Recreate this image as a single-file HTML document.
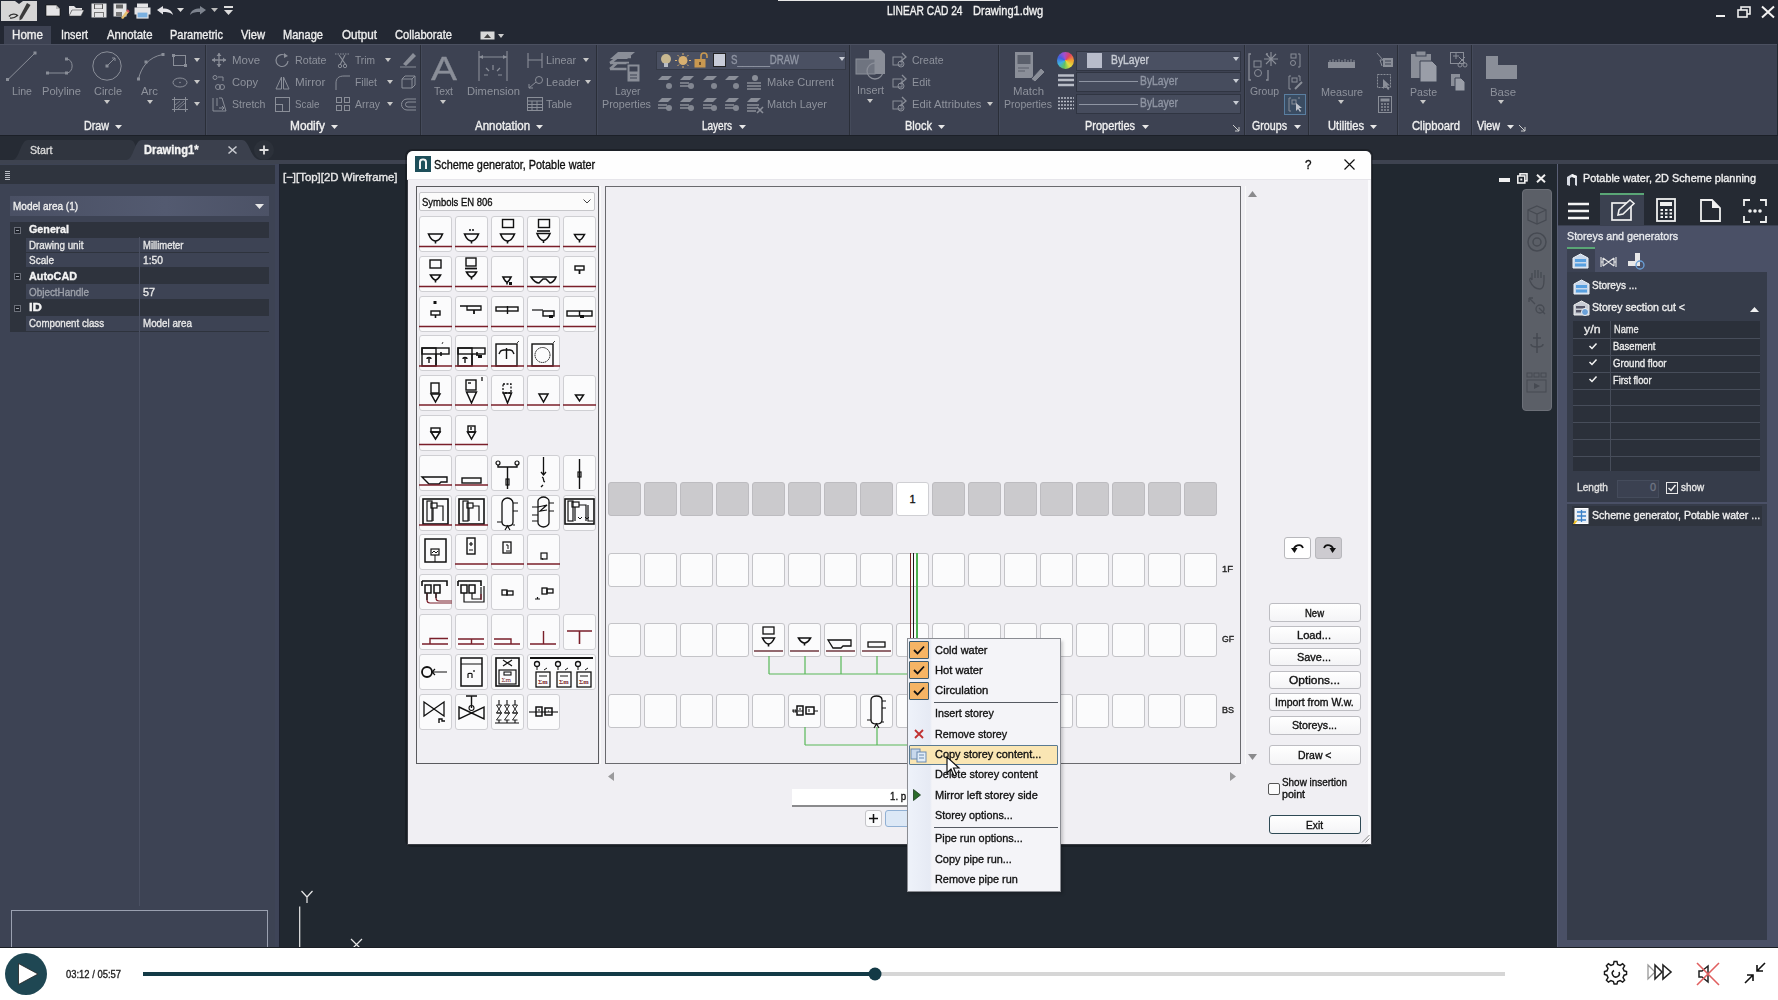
<!DOCTYPE html><html><head><meta charset="utf-8"><style>
*{margin:0;padding:0;box-sizing:border-box}
html,body{width:1778px;height:1000px;overflow:hidden;background:#212830;font-family:"Liberation Sans",sans-serif;position:relative}
.a{position:absolute}
.t{position:absolute;white-space:nowrap;line-height:1;-webkit-text-stroke:0.35px currentColor}
svg.a{overflow:visible}
</style></head><body>
<div class="a" style="left:0px;top:0px;width:1778px;height:44px;background:#232833;"></div>
<div class="a" style="left:778px;top:0px;width:222px;height:1px;background:#e8e8e8;"></div>
<div class="a" style="left:1px;top:1px;width:36px;height:20px;background:#d6d6d6;"></div>
<svg class="a" style="left:1px;top:1px;" width="36" height="20" viewBox="0 0 36 20"><path d="M26 2 L29.5 4 L21 18 L18.5 19.5 L18.5 16 Z" fill="#3a3a3a"/><path d="M8 15.5 C10 12.5 15 12.5 16.5 14.5 C14 16.5 11 17.5 9 17" stroke="#333" stroke-width="1.4" fill="none"/><path d="M14 0 L18 3 L22 0" fill="#232833"/></svg>
<svg class="a" style="left:45px;top:4px;" width="17" height="13" viewBox="0 0 17 13"><path d="M1 1 H11 L15 5 V12 H1 Z" fill="#e4e4e6" stroke="#111" stroke-width="0.6"/><path d="M11 1 V5 H15" fill="#bbb"/></svg>
<svg class="a" style="left:68px;top:5px;" width="17" height="12" viewBox="0 0 17 12"><path d="M1 1 H6 L8 3 H14 V5 H4 L1 11 Z" fill="#e4e4e6"/><path d="M4 5 H16 L13 11 H1 Z" fill="#e4e4e6" stroke="#333" stroke-width="0.5"/></svg>
<svg class="a" style="left:91px;top:3px;" width="16" height="15" viewBox="0 0 16 15"><rect x="0.5" y="0.5" width="15" height="14" fill="#e4e4e6"/><rect x="3" y="1" width="9" height="5" fill="#555"/><rect x="4" y="1.5" width="7" height="4" fill="#e4e4e6"/><rect x="3" y="9" width="10" height="5" fill="#777"/><rect x="4" y="10" width="8" height="4" fill="#e4e4e6"/></svg>
<svg class="a" style="left:113px;top:3px;" width="16" height="16" viewBox="0 0 16 16"><rect x="0.5" y="0.5" width="13" height="13" fill="#e4e4e6"/><rect x="3" y="1.5" width="7" height="4" fill="#666"/><rect x="3" y="9" width="6" height="4" fill="#777"/><path d="M8 15 L14 7 L16 9 L10 16 Z" fill="#e8c070"/><path d="M14 7 L16 9" stroke="#d05060" stroke-width="2"/></svg>
<svg class="a" style="left:134px;top:3px;" width="17" height="15" viewBox="0 0 17 15"><rect x="3" y="0.5" width="11" height="4" fill="#e4e4e6"/><rect x="0.5" y="4.5" width="16" height="7" fill="#e4e4e6"/><rect x="3" y="9" width="11" height="6" fill="#7ab0e0" stroke="#e4e4e6" stroke-width="1.2"/></svg>
<svg class="a" style="left:157px;top:6px;" width="17" height="9" viewBox="0 0 17 9"><path d="M0 4 L6 0 V2.5 C11 2.5 15 4 16 9 C13 6 10 6 6 6 V8.5 Z" fill="#e4e4e8"/></svg>
<svg class="a" style="left:177px;top:8px;" width="7" height="4" viewBox="0 0 7 4"><path d="M0 0 H7 L3.5 4 Z" fill="#ddd"/></svg>
<svg class="a" style="left:190px;top:6px;" width="17" height="9" viewBox="0 0 17 9"><path d="M16 4 L10 0 V2.5 C5 2.5 1 4 0 9 C3 6 6 6 10 6 V8.5 Z" fill="#7d838e"/></svg>
<svg class="a" style="left:211px;top:8px;" width="7" height="4" viewBox="0 0 7 4"><path d="M0 0 H7 L3.5 4 Z" fill="#bbb"/></svg>
<svg class="a" style="left:224px;top:6px;" width="9" height="10" viewBox="0 0 9 10"><rect x="0" y="0" width="9" height="2" fill="#ddd"/><path d="M0 4 H9 L4.5 9 Z" fill="#ddd"/></svg>
<div class="t" style="left:887.0px;top:4.1px;font-size:13px;color:#f2f2f2;transform:scaleX(0.786);transform-origin:0 0;">LINEAR CAD 24</div>
<div class="t" style="left:973.4px;top:4.1px;font-size:13px;color:#f2f2f2;transform:scaleX(0.851);transform-origin:0 0;">Drawing1.dwg</div>
<div class="a" style="left:1716px;top:15px;width:9px;height:2px;background:#f0f0f0;"></div>
<svg class="a" style="left:1737px;top:6px;" width="15" height="12" viewBox="0 0 15 12"><rect x="4" y="1" width="9" height="7" fill="none" stroke="#eee" stroke-width="1.6"/><rect x="1" y="4" width="9" height="7" fill="#232833" stroke="#eee" stroke-width="1.6"/></svg>
<svg class="a" style="left:1761px;top:6px;" width="14" height="12" viewBox="0 0 14 12"><path d="M1 0.5 L13 11.5 M13 0.5 L1 11.5" stroke="#f2f2f2" stroke-width="2"/></svg>
<div class="a" style="left:4px;top:26px;width:47px;height:19px;background:#3d4252;"></div>
<div class="t" style="left:12.0px;top:29.0px;font-size:12px;color:#eeeeee;transform:scaleX(0.969);transform-origin:0 0;">Home</div>
<div class="t" style="left:61.0px;top:29.0px;font-size:12px;color:#eeeeee;transform:scaleX(0.900);transform-origin:0 0;">Insert</div>
<div class="t" style="left:106.5px;top:29.0px;font-size:12px;color:#eeeeee;transform:scaleX(0.947);transform-origin:0 0;">Annotate</div>
<div class="t" style="left:170.0px;top:29.0px;font-size:12px;color:#eeeeee;transform:scaleX(0.914);transform-origin:0 0;">Parametric</div>
<div class="t" style="left:241.0px;top:29.0px;font-size:12px;color:#eeeeee;transform:scaleX(0.931);transform-origin:0 0;">View</div>
<div class="t" style="left:283.0px;top:29.0px;font-size:12px;color:#eeeeee;transform:scaleX(0.922);transform-origin:0 0;">Manage</div>
<div class="t" style="left:342.0px;top:29.0px;font-size:12px;color:#eeeeee;transform:scaleX(0.972);transform-origin:0 0;">Output</div>
<div class="t" style="left:395.0px;top:29.0px;font-size:12px;color:#eeeeee;transform:scaleX(0.929);transform-origin:0 0;">Collaborate</div>
<svg class="a" style="left:480px;top:31px;" width="15" height="10" viewBox="0 0 15 10"><rect x="0.5" y="0.5" width="14" height="8" fill="#d8d8d8"/><path d="M4 7 L7.5 3 L11 7 Z" fill="#444"/></svg>
<svg class="a" style="left:498px;top:34px;" width="6" height="4" viewBox="0 0 6 4"><path d="M0 0 H6 L3 4 Z" fill="#ccc"/></svg>
<div class="a" style="left:0px;top:44px;width:1777px;height:92px;background:#3d4252;"></div>
<div class="a" style="left:0px;top:44px;width:1777px;height:1px;background:#4b5060;"></div>
<div class="a" style="left:0px;top:135px;width:1778px;height:1px;background:#1c2028;"></div>
<div class="a" style="left:205px;top:45px;width:1px;height:90px;background:#2a2e38;"></div>
<div class="a" style="left:206px;top:45px;width:1px;height:90px;background:#444a5a;"></div>
<div class="a" style="left:420px;top:45px;width:1px;height:90px;background:#2a2e38;"></div>
<div class="a" style="left:421px;top:45px;width:1px;height:90px;background:#444a5a;"></div>
<div class="a" style="left:596px;top:45px;width:1px;height:90px;background:#2a2e38;"></div>
<div class="a" style="left:597px;top:45px;width:1px;height:90px;background:#444a5a;"></div>
<div class="a" style="left:849px;top:45px;width:1px;height:90px;background:#2a2e38;"></div>
<div class="a" style="left:850px;top:45px;width:1px;height:90px;background:#444a5a;"></div>
<div class="a" style="left:998px;top:45px;width:1px;height:90px;background:#2a2e38;"></div>
<div class="a" style="left:999px;top:45px;width:1px;height:90px;background:#444a5a;"></div>
<div class="a" style="left:1244px;top:45px;width:1px;height:90px;background:#2a2e38;"></div>
<div class="a" style="left:1245px;top:45px;width:1px;height:90px;background:#444a5a;"></div>
<div class="a" style="left:1308px;top:45px;width:1px;height:90px;background:#2a2e38;"></div>
<div class="a" style="left:1309px;top:45px;width:1px;height:90px;background:#444a5a;"></div>
<div class="a" style="left:1397px;top:45px;width:1px;height:90px;background:#2a2e38;"></div>
<div class="a" style="left:1398px;top:45px;width:1px;height:90px;background:#444a5a;"></div>
<div class="a" style="left:1471px;top:45px;width:1px;height:90px;background:#2a2e38;"></div>
<div class="a" style="left:1472px;top:45px;width:1px;height:90px;background:#444a5a;"></div>
<svg class="a" style="left:5px;top:51px;" width="32" height="31" viewBox="0 0 32 31"><path d="M2.5 29 L30 2" stroke="#8a8e98" stroke-width="1"/><rect x="1" y="27" width="3" height="3" fill="#8a8e98"/><rect x="28.5" y="0.5" width="3" height="3" fill="#8a8e98"/></svg>
<div class="t" style="left:11.5px;top:86.4px;font-size:11px;color:#8e929c;transform:scaleX(0.962);transform-origin:0 0;-webkit-text-stroke:0">Line</div>
<svg class="a" style="left:45px;top:57px;" width="32" height="20" viewBox="0 0 32 20"><path d="M2.5 16 H21.5 M21.5 2 C29 2 29 16 21.5 16" stroke="#8a8e98" stroke-width="1" fill="none"/><rect x="1" y="14.5" width="3" height="3" fill="#8a8e98"/><rect x="20" y="14.5" width="3" height="3" fill="#8a8e98"/><rect x="20" y="0.5" width="3" height="3" fill="#8a8e98"/></svg>
<div class="t" style="left:41.5px;top:86.4px;font-size:11px;color:#8e929c;transform:scaleX(1.012);transform-origin:0 0;-webkit-text-stroke:0">Polyline</div>
<svg class="a" style="left:91px;top:51px;" width="32" height="32" viewBox="0 0 32 32"><circle cx="16" cy="15" r="14.2" stroke="#8a8e98" stroke-width="1" fill="none"/><rect x="14.5" y="13.5" width="3" height="3" fill="#8a8e98"/><path d="M17 14 L24 7 M21 7 H24 V10" stroke="#8a8e98" stroke-width="1" fill="none"/></svg>
<div class="t" style="left:94.0px;top:86.4px;font-size:11px;color:#8e929c;transform:scaleX(0.996);transform-origin:0 0;-webkit-text-stroke:0">Circle</div>
<svg class="a" style="left:104px;top:100px;" width="6" height="4" viewBox="0 0 6 4"><path d="M0 0 H6 L3 4 Z" fill="#c8c8c8"/></svg>
<svg class="a" style="left:136px;top:52px;" width="30" height="30" viewBox="0 0 30 30"><path d="M2.5 27 C5 16 12 5 27 2.5" stroke="#8a8e98" stroke-width="1" fill="none"/><rect x="1" y="25.5" width="3" height="3" fill="#8a8e98"/><rect x="8.5" y="8.5" width="3" height="3" fill="#8a8e98"/><rect x="25.5" y="1" width="3" height="3" fill="#8a8e98"/></svg>
<div class="t" style="left:141.0px;top:86.4px;font-size:11px;color:#8e929c;transform:scaleX(1.030);transform-origin:0 0;-webkit-text-stroke:0">Arc</div>
<svg class="a" style="left:147px;top:100px;" width="6" height="4" viewBox="0 0 6 4"><path d="M0 0 H6 L3 4 Z" fill="#c8c8c8"/></svg>
<svg class="a" style="left:172px;top:54px;" width="16" height="13" viewBox="0 0 16 13"><rect x="1.5" y="1.5" width="12" height="10" stroke="#8a8e98" fill="none"/><rect x="0" y="0" width="3" height="3" fill="#8a8e98"/><rect x="12" y="10" width="3" height="3" fill="#8a8e98"/></svg>
<svg class="a" style="left:194px;top:58px;" width="6" height="4" viewBox="0 0 6 4"><path d="M0 0 H6 L3 4 Z" fill="#c8c8c8"/></svg>
<svg class="a" style="left:172px;top:77px;" width="16" height="11" viewBox="0 0 16 11"><ellipse cx="8" cy="5.5" rx="7" ry="4.5" stroke="#8a8e98" fill="none"/><circle cx="8" cy="5.5" r="0.8" fill="#8a8e98"/></svg>
<svg class="a" style="left:194px;top:80px;" width="6" height="4" viewBox="0 0 6 4"><path d="M0 0 H6 L3 4 Z" fill="#c8c8c8"/></svg>
<svg class="a" style="left:172px;top:97px;" width="17" height="15" viewBox="0 0 17 15"><rect x="2.5" y="2.5" width="11" height="10" stroke="#8a8e98" fill="none"/><path d="M0 2.5 H16 M0 12.5 H16 M2.5 0 V15 M13.5 0 V15" stroke="#8a8e98"/><path d="M4 11 L12 4 M6 12 L13 6 M3 8 L8 4" stroke="#8a8e98" stroke-width="0.8"/></svg>
<svg class="a" style="left:194px;top:102px;" width="6" height="4" viewBox="0 0 6 4"><path d="M0 0 H6 L3 4 Z" fill="#c8c8c8"/></svg>
<div class="t" style="left:84.0px;top:120.3px;font-size:12px;color:#f0f0f0;transform:scaleX(0.893);transform-origin:0 0;">Draw</div>
<svg class="a" style="left:115px;top:125px;" width="7" height="4" viewBox="0 0 7 4"><path d="M0 0 H7 L3.5 4 Z" fill="#e8e8e8"/></svg>
<svg class="a" style="left:212px;top:53px;" width="14" height="14" viewBox="0 0 14 14"><path d="M7 0 V14 M0 7 H14" stroke="#8a8e98" stroke-width="1.3"/><path d="M7 0 L4.5 3 H9.5Z M7 14 L4.5 11 H9.5Z M0 7 L3 4.5 V9.5Z M14 7 L11 4.5 V9.5Z" fill="#8a8e98"/></svg>
<div class="t" style="left:231.5px;top:54.8px;font-size:11px;color:#8e929c;transform:scaleX(1.041);transform-origin:0 0;-webkit-text-stroke:0">Move</div>
<svg class="a" style="left:275px;top:53px;" width="15" height="15" viewBox="0 0 15 15"><path d="M11 3 A6 6 0 1 0 13 8" stroke="#8a8e98" stroke-width="1.2" fill="none"/><path d="M9 0 L13 3 L9 5 Z" fill="#8a8e98"/></svg>
<div class="t" style="left:294.5px;top:54.8px;font-size:11px;color:#8e929c;transform:scaleX(0.972);transform-origin:0 0;-webkit-text-stroke:0">Rotate</div>
<svg class="a" style="left:335px;top:53px;" width="15" height="15" viewBox="0 0 15 15"><path d="M0 1 H15" stroke="#8a8e98" stroke-dasharray="1.5 1"/><path d="M4 2 L11 12 M10 2 L5 12" stroke="#8a8e98" stroke-width="1.1"/><circle cx="5" cy="13" r="1.7" stroke="#8a8e98" fill="none"/><circle cx="10" cy="13" r="1.7" stroke="#8a8e98" fill="none"/></svg>
<div class="t" style="left:355.0px;top:54.8px;font-size:11px;color:#8e929c;transform:scaleX(0.927);transform-origin:0 0;-webkit-text-stroke:0">Trim</div>
<svg class="a" style="left:385px;top:58px;" width="6" height="4" viewBox="0 0 6 4"><path d="M0 0 H6 L3 4 Z" fill="#c8c8c8"/></svg>
<svg class="a" style="left:400px;top:52px;" width="16" height="16" viewBox="0 0 16 16"><path d="M3 12 L13 1 L16 4 L6 14 Z" fill="#8a8e98"/><path d="M0 15 H16" stroke="#8a8e98"/></svg>
<svg class="a" style="left:212px;top:75px;" width="14" height="15" viewBox="0 0 14 15"><circle cx="3" cy="2.5" r="2" stroke="#8a8e98" fill="none"/><path d="M6 2 H11 V6" stroke="#8a8e98" fill="none"/><circle cx="6" cy="12" r="2.5" stroke="#8a8e98" fill="none"/><circle cx="10" cy="12" r="2.5" stroke="#8a8e98" fill="none"/></svg>
<div class="t" style="left:231.5px;top:77.1px;font-size:11px;color:#8e929c;transform:scaleX(1.013);transform-origin:0 0;-webkit-text-stroke:0">Copy</div>
<svg class="a" style="left:275px;top:76px;" width="15" height="14" viewBox="0 0 15 14"><path d="M6.5 1 L1 13 H6.5 Z M8.5 1 L14 13 H8.5 Z" stroke="#8a8e98" fill="none"/></svg>
<div class="t" style="left:294.5px;top:77.1px;font-size:11px;color:#8e929c;transform:scaleX(1.062);transform-origin:0 0;-webkit-text-stroke:0">Mirror</div>
<svg class="a" style="left:335px;top:75px;" width="15" height="16" viewBox="0 0 15 16"><path d="M1 15 V8 C1 3 4 1 9 1 H15" stroke="#8a8e98" fill="none"/></svg>
<div class="t" style="left:355.0px;top:77.1px;font-size:11px;color:#8e929c;transform:scaleX(0.947);transform-origin:0 0;-webkit-text-stroke:0">Fillet</div>
<svg class="a" style="left:387px;top:80px;" width="6" height="4" viewBox="0 0 6 4"><path d="M0 0 H6 L3 4 Z" fill="#c8c8c8"/></svg>
<svg class="a" style="left:401px;top:75px;" width="15" height="14" viewBox="0 0 15 14"><path d="M1 4 H11 V13 H1 Z M1 4 L4 1 H14 V10 L11 13 M11 4 L14 1" stroke="#8a8e98" fill="none"/></svg>
<svg class="a" style="left:212px;top:97px;" width="15" height="15" viewBox="0 0 15 15"><path d="M1 1 V14 H14 L10 1 H7 M5 1 V9" stroke="#8a8e98" fill="none"/><path d="M7 11 H12 M10 9 L12 11 L10 13" stroke="#8a8e98" fill="none"/></svg>
<div class="t" style="left:231.5px;top:99.1px;font-size:11px;color:#8e929c;transform:scaleX(0.961);transform-origin:0 0;-webkit-text-stroke:0">Stretch</div>
<svg class="a" style="left:275px;top:97px;" width="15" height="15" viewBox="0 0 15 15"><rect x="0.5" y="0.5" width="14" height="14" stroke="#8a8e98" fill="none"/><rect x="0.5" y="7.5" width="7" height="7" stroke="#8a8e98" fill="none"/></svg>
<div class="t" style="left:294.5px;top:99.1px;font-size:11px;color:#8e929c;transform:scaleX(0.890);transform-origin:0 0;-webkit-text-stroke:0">Scale</div>
<svg class="a" style="left:336px;top:97px;" width="14" height="14" viewBox="0 0 14 14"><rect x="0.5" y="0.5" width="5" height="5" stroke="#8a8e98" fill="none"/><rect x="8.5" y="0.5" width="5" height="5" stroke="#8a8e98" fill="none"/><rect x="0.5" y="8.5" width="5" height="5" stroke="#8a8e98" fill="none"/><rect x="8.5" y="8.5" width="5" height="5" stroke="#8a8e98" fill="none"/></svg>
<div class="t" style="left:355.0px;top:99.1px;font-size:11px;color:#8e929c;transform:scaleX(0.951);transform-origin:0 0;-webkit-text-stroke:0">Array</div>
<svg class="a" style="left:387px;top:102px;" width="6" height="4" viewBox="0 0 6 4"><path d="M0 0 H6 L3 4 Z" fill="#c8c8c8"/></svg>
<svg class="a" style="left:401px;top:98px;" width="15" height="13" viewBox="0 0 15 13"><path d="M15 1 H6 A5.5 5.5 0 0 0 6 12 H15 M15 4 H7 A2.5 2.5 0 0 0 7 9 H15" stroke="#8a8e98" fill="none"/></svg>
<div class="t" style="left:290.0px;top:120.3px;font-size:12px;color:#f0f0f0;transform:scaleX(0.990);transform-origin:0 0;">Modify</div>
<svg class="a" style="left:331px;top:125px;" width="7" height="4" viewBox="0 0 7 4"><path d="M0 0 H7 L3.5 4 Z" fill="#e8e8e8"/></svg>
<div class="t" style="left:431.0px;top:51.2px;font-size:34px;color:#8a8e98;transform:scaleX(1.146);transform-origin:0 0;">A</div>
<div class="t" style="left:434.0px;top:86.4px;font-size:11px;color:#8e929c;transform:scaleX(0.942);transform-origin:0 0;-webkit-text-stroke:0">Text</div>
<svg class="a" style="left:440px;top:100px;" width="6" height="4" viewBox="0 0 6 4"><path d="M0 0 H6 L3 4 Z" fill="#c8c8c8"/></svg>
<svg class="a" style="left:477px;top:51px;" width="32" height="30" viewBox="0 0 32 30"><path d="M2 0 V30 M30 0 V30 M2 6 H30" stroke="#8a8e98" stroke-width="1.1"/><path d="M2 6 L6 4 V8 Z M30 6 L26 4 V8Z" fill="#8a8e98"/><path d="M16 14 V19 M9 17 L12 20 M23 17 L20 20 M7 24 H11 M21 24 H25" stroke="#8a8e98" stroke-width="1.2"/></svg>
<div class="t" style="left:467.0px;top:86.4px;font-size:11px;color:#8e929c;transform:scaleX(1.020);transform-origin:0 0;-webkit-text-stroke:0">Dimension</div>
<svg class="a" style="left:527px;top:53px;" width="16" height="15" viewBox="0 0 16 15"><path d="M1 0 V15 M15 0 V15 M1 7 H15" stroke="#8a8e98" stroke-width="1.1"/></svg>
<div class="t" style="left:546.0px;top:54.8px;font-size:11px;color:#8e929c;transform:scaleX(0.981);transform-origin:0 0;-webkit-text-stroke:0">Linear</div>
<svg class="a" style="left:583px;top:58px;" width="6" height="4" viewBox="0 0 6 4"><path d="M0 0 H6 L3 4 Z" fill="#c8c8c8"/></svg>
<svg class="a" style="left:527px;top:75px;" width="17" height="15" viewBox="0 0 17 15"><circle cx="12" cy="5" r="3.5" stroke="#8a8e98" fill="none"/><path d="M9 7 L2 13 M2 13 V9 M2 13 H6" stroke="#8a8e98" fill="none"/></svg>
<div class="t" style="left:546.0px;top:77.1px;font-size:11px;color:#8e929c;transform:scaleX(0.993);transform-origin:0 0;-webkit-text-stroke:0">Leader</div>
<svg class="a" style="left:585px;top:80px;" width="6" height="4" viewBox="0 0 6 4"><path d="M0 0 H6 L3 4 Z" fill="#c8c8c8"/></svg>
<svg class="a" style="left:527px;top:97px;" width="16" height="14" viewBox="0 0 16 14"><rect x="0.5" y="0.5" width="15" height="13" stroke="#8a8e98" fill="none"/><path d="M0 4 H16 M0 7.5 H16 M0 10.5 H16 M5 4 V14 M10 4 V14" stroke="#8a8e98"/></svg>
<div class="t" style="left:546.0px;top:99.1px;font-size:11px;color:#8e929c;transform:scaleX(0.989);transform-origin:0 0;-webkit-text-stroke:0">Table</div>
<div class="t" style="left:475.0px;top:120.3px;font-size:12px;color:#f0f0f0;transform:scaleX(0.959);transform-origin:0 0;">Annotation</div>
<svg class="a" style="left:536px;top:125px;" width="7" height="4" viewBox="0 0 7 4"><path d="M0 0 H7 L3.5 4 Z" fill="#e8e8e8"/></svg>
<svg class="a" style="left:609px;top:51px;" width="34" height="32" viewBox="0 0 34 32"><path d="M9 1 H26 L18 8 H1 Z" fill="#8a8e98"/><path d="M1 12 L9 6 H22 M1 18 L8 12 H20 M1 12 H20 M1 18 H18" stroke="#8a8e98" stroke-width="2.5" fill="none"/><rect x="18" y="13" width="13" height="18" fill="#8a8e98" stroke="#3d4252"/><rect x="20.5" y="15.5" width="8" height="5" fill="#3d4252"/><path d="M21 24 H28 M21 27 H28" stroke="#3d4252"/></svg>
<div class="t" style="left:614.5px;top:85.7px;font-size:11px;color:#8e929c;transform:scaleX(0.927);transform-origin:0 0;-webkit-text-stroke:0">Layer</div>
<div class="t" style="left:602.0px;top:99.2px;font-size:11px;color:#8e929c;transform:scaleX(0.977);transform-origin:0 0;-webkit-text-stroke:0">Properties</div>
<div class="a" style="left:656px;top:51px;width:190px;height:19px;background:#4a5062;border:1px solid #353a47;"></div>
<svg class="a" style="left:660px;top:53px;" width="12" height="15" viewBox="0 0 12 15"><circle cx="6" cy="6" r="5" fill="#c8b890"/><rect x="4" y="10" width="4" height="4" fill="#b8bcc4"/></svg>
<svg class="a" style="left:675px;top:53px;" width="16" height="15" viewBox="0 0 16 15"><circle cx="8" cy="7.5" r="4.5" fill="#d8b070"/><path d="M8 0 V2 M8 13 V15 M0 7.5 H2 M14 7.5 H16 M2.5 2 L4 3.5 M12 11.5 L13.5 13 M13.5 2 L12 3.5 M4 11.5 L2.5 13" stroke="#d8b070"/></svg>
<svg class="a" style="left:694px;top:52px;" width="14" height="16" viewBox="0 0 14 16"><rect x="0.5" y="7" width="11" height="8.5" fill="#c89850"/><path d="M7 7 V4 A3 3 0 0 1 13 4 V6" stroke="#c89850" stroke-width="1.6" fill="none"/><rect x="5" y="10" width="2" height="3" fill="#6a5030"/></svg>
<div class="a" style="left:713px;top:53px;width:13px;height:14px;background:#c8ccd8;border:1px solid #222;"></div>
<div class="t" style="left:731.0px;top:54.3px;font-size:12px;color:#8f95a3;transform:scaleX(0.807);transform-origin:0 0;">S______DRAW</div>
<svg class="a" style="left:839px;top:57px;" width="6" height="4" viewBox="0 0 6 4"><path d="M0 0 H6 L3 4 Z" fill="#c8ccd4"/></svg>
<svg class="a" style="left:658px;top:75px;" width="17" height="16" viewBox="0 0 17 16"><path d="M4 1 H14 L10 5 H0 Z" fill="#8a8e98"/><path d="M0 8 H9 M0 11 H9" stroke="#8a8e98" stroke-width="0"/><circle cx="11" cy="11" r="3" fill="#8a8e98" opacity="0.9"/></svg>
<svg class="a" style="left:680px;top:75px;" width="17" height="16" viewBox="0 0 17 16"><path d="M4 1 H14 L10 5 H0 Z" fill="#8a8e98"/><path d="M0 8 H9 M0 11 H9" stroke="#8a8e98" stroke-width="1.5"/><circle cx="11" cy="11" r="3" fill="#8a8e98" opacity="0.9"/></svg>
<svg class="a" style="left:703px;top:75px;" width="17" height="16" viewBox="0 0 17 16"><path d="M4 1 H14 L10 5 H0 Z" fill="#8a8e98"/><path d="M0 8 H9 M0 11 H9" stroke="#8a8e98" stroke-width="0"/><circle cx="11" cy="11" r="3" fill="#8a8e98" opacity="0.9"/></svg>
<svg class="a" style="left:725px;top:75px;" width="17" height="16" viewBox="0 0 17 16"><path d="M4 1 H14 L10 5 H0 Z" fill="#8a8e98"/><path d="M0 8 H9 M0 11 H9" stroke="#8a8e98" stroke-width="0"/><circle cx="11" cy="11" r="3" fill="#8a8e98" opacity="0.9"/></svg>
<svg class="a" style="left:747px;top:75px;" width="17" height="16" viewBox="0 0 17 16"><circle cx="8" cy="3" r="3" fill="#8a8e98"/><path d="M0 8 H14 M0 11 H14 M0 14 H14" stroke="#8a8e98" stroke-width="1.6"/></svg>
<div class="t" style="left:767.0px;top:76.9px;font-size:11px;color:#8e929c;transform:scaleX(1.006);transform-origin:0 0;-webkit-text-stroke:0">Make Current</div>
<svg class="a" style="left:658px;top:97px;" width="17" height="16" viewBox="0 0 17 16"><path d="M4 1 H14 L10 5 H0 Z" fill="#8a8e98"/><path d="M0 8 H9 M0 11 H9" stroke="#8a8e98" stroke-width="1.5"/><circle cx="11" cy="11" r="3" fill="#8a8e98" opacity="0.9"/></svg>
<svg class="a" style="left:680px;top:97px;" width="17" height="16" viewBox="0 0 17 16"><path d="M4 1 H14 L10 5 H0 Z" fill="#8a8e98"/><path d="M0 8 H9 M0 11 H9" stroke="#8a8e98" stroke-width="1.5"/><circle cx="11" cy="11" r="3" fill="#8a8e98" opacity="0.9"/></svg>
<svg class="a" style="left:703px;top:97px;" width="17" height="16" viewBox="0 0 17 16"><path d="M4 1 H14 L10 5 H0 Z" fill="#8a8e98"/><path d="M0 8 H9 M0 11 H9" stroke="#8a8e98" stroke-width="1.5"/><circle cx="11" cy="11" r="3" fill="#8a8e98" opacity="0.9"/></svg>
<svg class="a" style="left:725px;top:97px;" width="17" height="16" viewBox="0 0 17 16"><path d="M4 1 H14 L10 5 H0 Z" fill="#8a8e98"/><path d="M0 8 H9 M0 11 H9" stroke="#8a8e98" stroke-width="1.5"/><circle cx="11" cy="11" r="3" fill="#8a8e98" opacity="0.9"/></svg>
<svg class="a" style="left:747px;top:97px;" width="17" height="16" viewBox="0 0 17 16"><path d="M4 1 H14 L10 5 H0 Z" fill="#8a8e98"/><path d="M0 8 H12 M0 11 H10 M0 14 H9" stroke="#8a8e98" stroke-width="1.6"/><path d="M10 10 L16 16 M16 10 L10 16" stroke="#8a8e98" stroke-width="1.6"/></svg>
<div class="t" style="left:767.0px;top:98.9px;font-size:11px;color:#8e929c;transform:scaleX(0.991);transform-origin:0 0;-webkit-text-stroke:0">Match Layer</div>
<div class="t" style="left:702.0px;top:120.3px;font-size:12px;color:#f0f0f0;transform:scaleX(0.833);transform-origin:0 0;">Layers</div>
<svg class="a" style="left:739px;top:125px;" width="7" height="4" viewBox="0 0 7 4"><path d="M0 0 H7 L3.5 4 Z" fill="#e8e8e8"/></svg>
<svg class="a" style="left:855px;top:50px;" width="30" height="31" viewBox="0 0 30 31"><path d="M14 0 H26 L30 4 V24 H14 Z" fill="#8a8e98"/><rect x="1" y="9" width="19" height="15" fill="#6f7480" stroke="#8a8e98"/><circle cx="20" cy="21" r="8" stroke="#8a8e98" fill="none" stroke-width="1.3"/></svg>
<div class="t" style="left:856.5px;top:85.2px;font-size:11px;color:#8e929c;transform:scaleX(0.982);transform-origin:0 0;-webkit-text-stroke:0">Insert</div>
<svg class="a" style="left:867px;top:99px;" width="6" height="4" viewBox="0 0 6 4"><path d="M0 0 H6 L3 4 Z" fill="#c8c8c8"/></svg>
<svg class="a" style="left:892px;top:53px;" width="15" height="15" viewBox="0 0 15 15"><rect x="1" y="4" width="9" height="8" stroke="#8a8e98" fill="none"/><circle cx="9" cy="11" r="3" stroke="#8a8e98" fill="none"/><path d="M10 0 L14 4 L8 9" stroke="#8a8e98" stroke-width="1.3" fill="none"/></svg>
<svg class="a" style="left:892px;top:75px;" width="15" height="15" viewBox="0 0 15 15"><rect x="1" y="4" width="9" height="8" stroke="#8a8e98" fill="none"/><circle cx="9" cy="11" r="3" stroke="#8a8e98" fill="none"/><path d="M10 0 L14 4 L8 9" stroke="#8a8e98" stroke-width="1.3" fill="none"/></svg>
<svg class="a" style="left:892px;top:97px;" width="15" height="15" viewBox="0 0 15 15"><rect x="1" y="4" width="9" height="8" stroke="#8a8e98" fill="none"/><circle cx="9" cy="11" r="3" stroke="#8a8e98" fill="none"/><path d="M10 0 L14 4 L8 9" stroke="#8a8e98" stroke-width="1.3" fill="none"/></svg>
<div class="t" style="left:911.5px;top:54.8px;font-size:11px;color:#8e929c;transform:scaleX(0.954);transform-origin:0 0;-webkit-text-stroke:0">Create</div>
<div class="t" style="left:911.5px;top:77.2px;font-size:11px;color:#8e929c;transform:scaleX(0.976);transform-origin:0 0;-webkit-text-stroke:0">Edit</div>
<div class="t" style="left:911.5px;top:99.2px;font-size:11px;color:#8e929c;transform:scaleX(1.024);transform-origin:0 0;-webkit-text-stroke:0">Edit Attributes</div>
<svg class="a" style="left:987px;top:102px;" width="6" height="4" viewBox="0 0 6 4"><path d="M0 0 H6 L3 4 Z" fill="#c8c8c8"/></svg>
<div class="t" style="left:905.0px;top:120.3px;font-size:12px;color:#f0f0f0;transform:scaleX(0.920);transform-origin:0 0;">Block</div>
<svg class="a" style="left:938px;top:125px;" width="7" height="4" viewBox="0 0 7 4"><path d="M0 0 H7 L3.5 4 Z" fill="#e8e8e8"/></svg>
<svg class="a" style="left:1013px;top:51px;" width="32" height="32" viewBox="0 0 32 32"><rect x="2" y="1" width="18" height="26" fill="#8a8e98"/><rect x="4.5" y="4" width="13" height="9" fill="#5a5f6b"/><path d="M5 17 H16 M5 20 H12" stroke="#5a5f6b"/><path d="M18 28 L28 17 L32 21 L22 31 Z" fill="#8a8e98" stroke="#3d4252"/></svg>
<div class="t" style="left:1013.0px;top:85.7px;font-size:11px;color:#8e929c;transform:scaleX(1.035);transform-origin:0 0;-webkit-text-stroke:0">Match</div>
<div class="t" style="left:1004.0px;top:99.4px;font-size:11px;color:#8e929c;transform:scaleX(0.957);transform-origin:0 0;-webkit-text-stroke:0">Properties</div>
<div class="a" style="left:1057px;top:52px;width:17px;height:17px;border-radius:9px;background:conic-gradient(from 90deg,#f0a030,#e0e040,#60c060,#40b0e0,#4060e0,#a050d0,#e04060,#f0a030)"></div>
<svg class="a" style="left:1058px;top:74px;" width="16" height="15" viewBox="0 0 16 15"><path d="M0 1.5 H16 M0 6 H16 M0 11 H16" stroke="#b8bcc6" stroke-width="2.4"/></svg>
<svg class="a" style="left:1058px;top:97px;" width="16" height="14" viewBox="0 0 16 14"><path d="M0 1 H16 M0 4.5 H16 M0 8 H16 M0 11.5 H16" stroke="#b8bcc6" stroke-width="1.4" stroke-dasharray="2 1"/></svg>
<div class="a" style="left:1076px;top:51px;width:165px;height:20px;background:#4a5062;border:1px solid #303542;"></div>
<div class="a" style="left:1087px;top:53px;width:15px;height:15px;background:#b8bcca;"></div>
<div class="t" style="left:1111.0px;top:54.0px;font-size:12px;color:#c8ccd4;transform:scaleX(0.863);transform-origin:0 0;">ByLayer</div>
<svg class="a" style="left:1233px;top:57px;" width="6" height="4" viewBox="0 0 6 4"><path d="M0 0 H6 L3 4 Z" fill="#c8ccd4"/></svg>
<div class="a" style="left:1076px;top:72px;width:165px;height:20px;background:#464c5d;border:1px solid #303542;"></div>
<div class="a" style="left:1079px;top:81px;width:59px;height:1px;background:#8f95a3;"></div>
<div class="t" style="left:1140.0px;top:75.3px;font-size:12px;color:#8f95a3;transform:scaleX(0.863);transform-origin:0 0;">ByLayer</div>
<svg class="a" style="left:1233px;top:79px;" width="6" height="4" viewBox="0 0 6 4"><path d="M0 0 H6 L3 4 Z" fill="#c8ccd4"/></svg>
<div class="a" style="left:1076px;top:94px;width:165px;height:20px;background:#464c5d;border:1px solid #303542;"></div>
<div class="a" style="left:1079px;top:104px;width:59px;height:1px;background:#8f95a3;"></div>
<div class="t" style="left:1140.0px;top:97.3px;font-size:12px;color:#8f95a3;transform:scaleX(0.863);transform-origin:0 0;">ByLayer</div>
<svg class="a" style="left:1233px;top:101px;" width="6" height="4" viewBox="0 0 6 4"><path d="M0 0 H6 L3 4 Z" fill="#c8ccd4"/></svg>
<div class="t" style="left:1085.0px;top:120.3px;font-size:12px;color:#f0f0f0;transform:scaleX(0.914);transform-origin:0 0;">Properties</div>
<svg class="a" style="left:1142px;top:125px;" width="7" height="4" viewBox="0 0 7 4"><path d="M0 0 H7 L3.5 4 Z" fill="#e8e8e8"/></svg>
<svg class="a" style="left:1233px;top:125px;" width="6" height="6" viewBox="0 0 6 6"><path d="M0 0 L6 6 M6 2 V6 H2" stroke="#ccc" fill="none"/></svg>
<svg class="a" style="left:1248px;top:52px;" width="32" height="31" viewBox="0 0 32 31"><path d="M3 2 H1 V28 H3 M18 2 H20 M18 28 H20 V18" stroke="#8a8e98" stroke-width="1.3" fill="none"/><rect x="6" y="9" width="7" height="6" stroke="#8a8e98" fill="none"/><circle cx="10" cy="21" r="3.5" stroke="#8a8e98" fill="none"/><path d="M23 0 V14 M16 7 H30 M18 2 L28 12 M28 2 L18 12" stroke="#8a8e98" stroke-width="1.2"/></svg>
<div class="t" style="left:1250.0px;top:85.7px;font-size:11px;color:#8e929c;transform:scaleX(0.949);transform-origin:0 0;-webkit-text-stroke:0">Group</div>
<svg class="a" style="left:1288px;top:53px;" width="15" height="15" viewBox="0 0 15 15"><rect x="3" y="1" width="5" height="4" stroke="#8a8e98" fill="none"/><circle cx="5" cy="10" r="2.5" stroke="#8a8e98" fill="none"/><path d="M10 1 H12 V14 H10" stroke="#8a8e98" fill="none"/></svg>
<svg class="a" style="left:1288px;top:75px;" width="15" height="15" viewBox="0 0 15 15"><path d="M3 1 H1 V14 H3 M10 1 H12 V6" stroke="#8a8e98" fill="none"/><rect x="4" y="3" width="5" height="4" stroke="#8a8e98" fill="none"/><path d="M7 14 L14 7" stroke="#8a8e98" stroke-width="2"/></svg>
<div class="a" style="left:1284px;top:94px;width:22px;height:21px;background:#3a4c62;border:1px solid #5a7ea0;"></div>
<svg class="a" style="left:1288px;top:97px;" width="15" height="15" viewBox="0 0 15 15"><path d="M3 1 H1 V14 H3 M10 1 H12" stroke="#8a8e98" fill="none"/><rect x="4" y="3" width="4" height="4" stroke="#8a8e98" fill="none"/><path d="M8 6 L8 14 L10 12 L12 15 L13 14 L11 11 L14 11 Z" fill="#c0c4cc"/></svg>
<div class="t" style="left:1252.0px;top:120.3px;font-size:12px;color:#f0f0f0;transform:scaleX(0.889);transform-origin:0 0;">Groups</div>
<svg class="a" style="left:1294px;top:125px;" width="7" height="4" viewBox="0 0 7 4"><path d="M0 0 H7 L3.5 4 Z" fill="#e8e8e8"/></svg>
<svg class="a" style="left:1328px;top:59px;" width="28" height="10" viewBox="0 0 28 10"><rect x="0" y="3" width="27" height="6" fill="#8a8e98"/><path d="M2 3 V1 M5 3 V0 M8 3 V1 M11 3 V0 M14 3 V1 M17 3 V0 M20 3 V1 M23 3 V0 M26 3 V1" stroke="#8a8e98"/></svg>
<div class="t" style="left:1320.5px;top:86.7px;font-size:11px;color:#8e929c;transform:scaleX(0.981);transform-origin:0 0;-webkit-text-stroke:0">Measure</div>
<svg class="a" style="left:1338px;top:100px;" width="6" height="4" viewBox="0 0 6 4"><path d="M0 0 H6 L3 4 Z" fill="#c8c8c8"/></svg>
<svg class="a" style="left:1377px;top:52px;" width="16" height="16" viewBox="0 0 16 16"><path d="M0 1 L6 8 L3 8 L5 14" stroke="#8a8e98" fill="none"/><rect x="6" y="6" width="10" height="9" fill="#8a8e98"/><path d="M8 9 H14 M8 12 H14" stroke="#3d4252"/></svg>
<svg class="a" style="left:1377px;top:74px;" width="16" height="16" viewBox="0 0 16 16"><rect x="0.5" y="0.5" width="13" height="13" stroke="#8a8e98" fill="none" stroke-dasharray="2 1"/><path d="M6 5 L6 15 L8.5 12.5 L11 16 L12.5 15 L10 11.5 L13 11.5 Z" fill="#8a8e98"/></svg>
<svg class="a" style="left:1378px;top:96px;" width="14" height="17" viewBox="0 0 14 17"><rect x="0.5" y="0.5" width="13" height="16" stroke="#8a8e98" fill="none"/><rect x="2.5" y="2.5" width="9" height="3" fill="#8a8e98"/><path d="M3 8 H5 M6 8 H8 M9 8 H11 M3 11 H5 M6 11 H8 M9 11 H11 M3 14 H5 M6 14 H8 M9 14 H11" stroke="#8a8e98" stroke-width="1.5"/></svg>
<div class="t" style="left:1328.0px;top:120.3px;font-size:12px;color:#f0f0f0;transform:scaleX(0.931);transform-origin:0 0;">Utilities</div>
<svg class="a" style="left:1370px;top:125px;" width="7" height="4" viewBox="0 0 7 4"><path d="M0 0 H7 L3.5 4 Z" fill="#e8e8e8"/></svg>
<svg class="a" style="left:1410px;top:51px;" width="27" height="31" viewBox="0 0 27 31"><rect x="1" y="3" width="20" height="24" fill="#8a8e98"/><rect x="6" y="0" width="10" height="5" fill="#8a8e98" stroke="#3d4252"/><path d="M10 10 H22 L27 15 V31 H10 Z" fill="#9a9ea8" stroke="#3d4252"/></svg>
<div class="t" style="left:1410.0px;top:86.7px;font-size:11px;color:#8e929c;transform:scaleX(0.960);transform-origin:0 0;-webkit-text-stroke:0">Paste</div>
<svg class="a" style="left:1420px;top:100px;" width="6" height="4" viewBox="0 0 6 4"><path d="M0 0 H6 L3 4 Z" fill="#c8c8c8"/></svg>
<svg class="a" style="left:1450px;top:52px;" width="17" height="16" viewBox="0 0 17 16"><rect x="0.5" y="0.5" width="13" height="11" stroke="#8a8e98" fill="none"/><path d="M3 4 H9 M6 1 V7" stroke="#8a8e98"/><circle cx="10" cy="13" r="2" stroke="#8a8e98" fill="none"/><circle cx="15" cy="13" r="2" stroke="#8a8e98" fill="none"/><path d="M9 5 L15 11 M15 5 L9 11" stroke="#8a8e98"/></svg>
<svg class="a" style="left:1451px;top:74px;" width="14" height="17" viewBox="0 0 14 17"><rect x="0" y="0" width="9" height="12" fill="#8a8e98"/><path d="M4 4 H10 L14 8 V17 H4 Z" fill="#9a9ea8" stroke="#3d4252"/></svg>
<div class="t" style="left:1411.5px;top:120.3px;font-size:12px;color:#f0f0f0;transform:scaleX(0.935);transform-origin:0 0;">Clipboard</div>
<svg class="a" style="left:-100px;top:125px;" width="7" height="4" viewBox="0 0 7 4"><path d="M0 0 H7 L3.5 4 Z" fill="#e8e8e8"/></svg>
<svg class="a" style="left:1486px;top:56px;" width="31" height="23" viewBox="0 0 31 23"><path d="M0 0 H12 V9 H31 V23 H0 Z" fill="#8a8e98"/></svg>
<div class="t" style="left:1490.0px;top:86.7px;font-size:11px;color:#8e929c;transform:scaleX(1.037);transform-origin:0 0;-webkit-text-stroke:0">Base</div>
<svg class="a" style="left:1498px;top:100px;" width="6" height="4" viewBox="0 0 6 4"><path d="M0 0 H6 L3 4 Z" fill="#c8c8c8"/></svg>
<div class="t" style="left:1477.0px;top:120.3px;font-size:12px;color:#f0f0f0;transform:scaleX(0.892);transform-origin:0 0;">View</div>
<svg class="a" style="left:1507px;top:125px;" width="7" height="4" viewBox="0 0 7 4"><path d="M0 0 H7 L3.5 4 Z" fill="#e8e8e8"/></svg>
<svg class="a" style="left:1519px;top:125px;" width="6" height="6" viewBox="0 0 6 6"><path d="M0 0 L6 6 M6 2 V6 H2" stroke="#ccc" fill="none"/></svg>
<div class="a" style="left:0px;top:136px;width:1778px;height:24px;background:#262b34;"></div>
<svg class="a" style="left:12px;top:139px;" width="130" height="22" viewBox="0 0 130 22"><path d="M0 21 C8 21 8 1 16 1 H118 C126 1 124 21 130 21 Z" fill="#30353f"/></svg>
<svg class="a" style="left:126px;top:139px;" width="135" height="22" viewBox="0 0 135 22"><path d="M0 21 C8 21 8 1 16 1 H116 C124 1 124 21 135 21 Z" fill="#3b404d"/></svg>
<div class="t" style="left:29.5px;top:145.2px;font-size:11px;color:#d8d8d8;transform:scaleX(0.969);transform-origin:0 0;">Start</div>
<div class="t" style="left:143.5px;top:144.4px;font-size:12px;color:#f4f4f4;font-weight:bold;transform:scaleX(0.929);transform-origin:0 0;">Drawing1*</div>
<svg class="a" style="left:228px;top:146px;" width="9" height="8" viewBox="0 0 9 8"><path d="M0.5 0.5 L8.5 7.5 M8.5 0.5 L0.5 7.5" stroke="#c8cad0" stroke-width="1.6"/></svg>
<svg class="a" style="left:253px;top:140px;" width="22" height="20" viewBox="0 0 22 20"><circle cx="11" cy="10" r="10" fill="#2c313a"/><path d="M11 5.5 V14.5 M6.5 10 H15.5" stroke="#e0e0e0" stroke-width="1.8"/></svg>
<div class="a" style="left:0px;top:160px;width:1778px;height:4px;background:#3e4350;"></div>
<div class="a" style="left:0px;top:164px;width:279px;height:783px;background:#3d4354;"></div>
<div class="a" style="left:0px;top:165px;width:279px;height:19px;background:#2f343e;"></div>
<div class="a" style="left:5px;top:171px;width:5px;height:1px;background:#b8bcc4;"></div>
<div class="a" style="left:5px;top:173px;width:5px;height:1px;background:#b8bcc4;"></div>
<div class="a" style="left:5px;top:175px;width:5px;height:1px;background:#b8bcc4;"></div>
<div class="a" style="left:5px;top:177px;width:5px;height:1px;background:#b8bcc4;"></div>
<div class="a" style="left:5px;top:179px;width:5px;height:1px;background:#b8bcc4;"></div>
<div class="a" style="left:275px;top:164px;width:4px;height:783px;background:#3e4458;"></div>
<div class="a" style="left:279px;top:164px;width:2px;height:783px;background:#1e2230;"></div>
<div class="a" style="left:10px;top:196px;width:259px;height:20px;background:linear-gradient(90deg,#4a5064,#535a70 60%,#4c5266)"></div>
<div class="t" style="left:13.0px;top:200.7px;font-size:11px;color:#f0f0f0;transform:scaleX(0.909);transform-origin:0 0;">Model area (1)</div>
<svg class="a" style="left:255px;top:204px;" width="9" height="5" viewBox="0 0 9 5"><path d="M0 0 H9 L4.5 5 Z" fill="#e8e8e8"/></svg>
<div class="a" style="left:10px;top:222px;width:259px;height:110px;background:#2e333d;"></div>
<div class="a" style="left:10px;top:222px;width:259px;height:17px;background:#2e333d;"></div>
<div class="a" style="left:14px;top:227px;width:7px;height:7px;background:#1f232b;border:1px solid #6a6e78;"></div>
<div class="a" style="left:16px;top:230px;width:3px;height:1px;background:#9a9ea8;"></div>
<div class="a" style="left:26px;top:238px;width:243px;height:15px;background:#3d4354;"></div>
<div class="a" style="left:26px;top:252px;width:243px;height:1px;background:#2e333d;"></div>
<div class="a" style="left:26px;top:253px;width:243px;height:15px;background:#3d4354;"></div>
<div class="a" style="left:26px;top:267px;width:243px;height:1px;background:#2e333d;"></div>
<div class="a" style="left:10px;top:268px;width:259px;height:17px;background:#2e333d;"></div>
<div class="a" style="left:14px;top:273px;width:7px;height:7px;background:#1f232b;border:1px solid #6a6e78;"></div>
<div class="a" style="left:16px;top:276px;width:3px;height:1px;background:#9a9ea8;"></div>
<div class="a" style="left:26px;top:284px;width:243px;height:15px;background:#3d4354;"></div>
<div class="a" style="left:26px;top:299px;width:243px;height:1px;background:#2e333d;"></div>
<div class="a" style="left:10px;top:300px;width:259px;height:17px;background:#2e333d;"></div>
<div class="a" style="left:14px;top:305px;width:7px;height:7px;background:#1f232b;border:1px solid #6a6e78;"></div>
<div class="a" style="left:16px;top:308px;width:3px;height:1px;background:#9a9ea8;"></div>
<div class="a" style="left:26px;top:316px;width:243px;height:16px;background:#3d4354;"></div>
<div class="a" style="left:26px;top:331px;width:243px;height:1px;background:#2e333d;"></div>
<div class="a" style="left:139px;top:237px;width:1px;height:669px;background:#4a5062;"></div>
<div class="t" style="left:29.0px;top:224.2px;font-size:11px;color:#f4f4f4;font-weight:bold;transform:scaleX(0.976);transform-origin:0 0;">General</div>
<div class="t" style="left:29.0px;top:239.7px;font-size:11px;color:#e8e8e8;transform:scaleX(0.891);transform-origin:0 0;">Drawing unit</div>
<div class="t" style="left:143.0px;top:239.7px;font-size:11px;color:#e8e8e8;transform:scaleX(0.861);transform-origin:0 0;">Millimeter</div>
<div class="t" style="left:29.0px;top:255.2px;font-size:11px;color:#e8e8e8;transform:scaleX(0.909);transform-origin:0 0;">Scale</div>
<div class="t" style="left:143.0px;top:255.2px;font-size:11px;color:#e8e8e8;transform:scaleX(0.934);transform-origin:0 0;">1:50</div>
<div class="t" style="left:29.0px;top:270.7px;font-size:11px;color:#f4f4f4;font-weight:bold;transform:scaleX(0.982);transform-origin:0 0;">AutoCAD</div>
<div class="t" style="left:29.0px;top:286.7px;font-size:11px;color:#9da1aa;transform:scaleX(0.900);transform-origin:0 0;">ObjectHandle</div>
<div class="t" style="left:143.0px;top:286.7px;font-size:11px;color:#e8e8e8;transform:scaleX(0.981);transform-origin:0 0;">57</div>
<div class="t" style="left:29.0px;top:302.2px;font-size:11px;color:#f4f4f4;font-weight:bold;transform:scaleX(1.182);transform-origin:0 0;">ID</div>
<div class="t" style="left:29.0px;top:317.7px;font-size:11px;color:#e8e8e8;transform:scaleX(0.883);transform-origin:0 0;">Component class</div>
<div class="t" style="left:143.0px;top:317.7px;font-size:11px;color:#e8e8e8;transform:scaleX(0.890);transform-origin:0 0;">Model area</div>
<div class="a" style="left:11px;top:910px;width:257px;height:37px;border:1px solid #9aa0b0;border-bottom:none"></div>
<div class="a" style="left:280px;top:164px;width:1277px;height:783px;background:#212830;"></div>
<div class="t" style="left:283.0px;top:172.2px;font-size:11px;color:#e8e8e8;transform:scaleX(1.038);transform-origin:0 0;">[−][Top][2D Wireframe]</div>
<svg class="a" style="left:290px;top:888px;" width="75" height="60" viewBox="0 0 75 60"><path d="M9.7 59 V18.5" stroke="#e8e8e8" stroke-width="1.2"/><path d="M11.5 3 L17 9 L22.5 3 M17 9 V15" stroke="#e8e8e8" stroke-width="1.2" fill="none"/><path d="M61 51 L72 62 M72 51 L61 62" stroke="#e8e8e8" stroke-width="1.2"/></svg>
<div class="a" style="left:1557px;top:164px;width:221px;height:783px;background:#4a5066;"></div>
<div class="a" style="left:1557px;top:164px;width:1px;height:783px;background:#5a6076;"></div>
<div class="a" style="left:1558px;top:164px;width:220px;height:61px;background:#252a33;"></div>
<svg class="a" style="left:1566px;top:173px;" width="12" height="14" viewBox="0 0 12 14"><path d="M1 4 L6 1 L11 3 V13 L9 12 V5 L6 4 L4 5 V13 L1 12 Z" fill="#d8dce4"/><path d="M6 1 L11 3 L9 5 L6 4 Z" fill="#f4f4f4"/></svg>
<div class="t" style="left:1582.5px;top:173.3px;font-size:11.5px;color:#f0f0f0;transform:scaleX(0.946);transform-origin:0 0;">Potable water, 2D Scheme planning</div>
<svg class="a" style="left:1568px;top:202px;" width="22" height="18" viewBox="0 0 22 18"><path d="M0 2 H21 M0 9 H21 M0 16 H21" stroke="#f4f4f4" stroke-width="2.6"/></svg>
<div class="a" style="left:1600px;top:193px;width:44px;height:32px;background:#3b4150;"></div>
<div class="a" style="left:1600px;top:193px;width:44px;height:2px;background:#5aa676;"></div>
<svg class="a" style="left:1611px;top:199px;" width="24" height="22" viewBox="0 0 24 22"><rect x="1" y="4" width="19" height="17" fill="none" stroke="#f0f0f0" stroke-width="1.7"/><path d="M7 16 L8 11 L19 1 L23 4.5 L12 15 Z" fill="#3b4150" stroke="#f0f0f0" stroke-width="1.6"/></svg>
<svg class="a" style="left:1656px;top:198px;" width="20" height="24" viewBox="0 0 20 24"><rect x="1" y="1" width="18" height="22" fill="none" stroke="#f0f0f0" stroke-width="1.8"/><rect x="4" y="4" width="12" height="4" fill="#f0f0f0"/><path d="M4.5 12 H7 M9 12 H11.5 M13.5 12 H16 M4.5 15.5 H7 M9 15.5 H11.5 M13.5 15.5 H16 M4.5 19 H7 M9 19 H11.5 M13.5 19 H16" stroke="#f0f0f0" stroke-width="2"/></svg>
<svg class="a" style="left:1700px;top:199px;" width="21" height="23" viewBox="0 0 21 23"><path d="M1 1 H12 L20 9 V22 H1 Z" fill="none" stroke="#f0f0f0" stroke-width="1.8"/><path d="M12 1 V9 H20 Z" fill="#f0f0f0"/></svg>
<svg class="a" style="left:1743px;top:199px;" width="24" height="24" viewBox="0 0 24 24"><path d="M1 7 V1 H7 M17 1 H23 V7 M23 17 V23 H17 M7 23 H1 V17" fill="none" stroke="#f0f0f0" stroke-width="1.8"/><circle cx="7" cy="12" r="1.8" fill="#f0f0f0"/><circle cx="12" cy="12" r="1.8" fill="#f0f0f0"/><circle cx="17" cy="12" r="1.8" fill="#f0f0f0"/></svg>
<div class="a" style="left:1558px;top:225px;width:220px;height:1px;background:#3a4050;"></div>
<div class="t" style="left:1567.0px;top:231.0px;font-size:11.5px;color:#e8eaee;transform:scaleX(0.929);transform-origin:0 0;">Storeys and generators</div>
<div class="a" style="left:1567px;top:247px;width:28px;height:2px;background:#5aa676;"></div>
<div class="a" style="left:1567px;top:249px;width:28px;height:23px;background:#3b4152;"></div>
<svg class="a" style="left:1572px;top:253px;" width="17" height="16" viewBox="0 0 17 16"><path d="M1 5 L8.5 1 L16 5 V15 H1 Z" fill="#c8d8ec" stroke="#f0f4f8" stroke-width="1"/><rect x="3" y="6" width="11" height="3" fill="#58a0e0"/><rect x="3" y="10.5" width="11" height="3" fill="#58a0e0"/></svg>
<svg class="a" style="left:1600px;top:257px;" width="17" height="10" viewBox="0 0 17 10"><path d="M1 0 V10 M16 0 V10 M1 5 H3 M14 5 H16 M3 1 L14 9 M3 9 L14 1 M3 1 V9 M14 1 V9" stroke="#e8e8e8" stroke-width="1.1" fill="none"/></svg>
<svg class="a" style="left:1627px;top:253px;" width="18" height="17" viewBox="0 0 18 17"><rect x="8" y="0" width="5" height="9" fill="#e8e8e8"/><rect x="1" y="8" width="12" height="5" fill="#e8e8e8"/><circle cx="13" cy="12" r="4" fill="none" stroke="#6aa0d8" stroke-width="1.3"/></svg>
<div class="a" style="left:1567px;top:272px;width:200px;height:668px;background:#363c4a;"></div>
<svg class="a" style="left:1573px;top:279px;" width="17" height="16" viewBox="0 0 17 16"><path d="M1 5 L8.5 1 L16 5 V15 H1 Z" fill="#c8d8ec" stroke="#f0f4f8" stroke-width="1"/><rect x="3" y="6" width="11" height="3" fill="#58a0e0"/><rect x="3" y="10.5" width="11" height="3" fill="#58a0e0"/></svg>
<div class="t" style="left:1592.0px;top:280.3px;font-size:11.5px;color:#eeeeee;transform:scaleX(0.869);transform-origin:0 0;">Storeys ...</div>
<svg class="a" style="left:1573px;top:300px;" width="17" height="16" viewBox="0 0 17 16"><path d="M1 5 L8.5 1 L16 5 V15 H1 Z" fill="#c8ccd4" stroke="#f0f0f0"/><rect x="3" y="6" width="9" height="2.5" fill="#556"/><rect x="3" y="10" width="6" height="2.5" fill="#556"/><circle cx="12" cy="12" r="3.5" fill="#6aa0d8" stroke="#f0f0f0"/></svg>
<div class="t" style="left:1592.0px;top:302.1px;font-size:11.5px;color:#eeeeee;transform:scaleX(0.918);transform-origin:0 0;">Storey section cut &lt;</div>
<svg class="a" style="left:1750px;top:307px;" width="9" height="5" viewBox="0 0 9 5"><path d="M0 5 L4.5 0 L9 5 Z" fill="#f0f0f0"/></svg>
<div class="a" style="left:1573px;top:321px;width:187px;height:150px;background:#2b303a;"></div>
<div class="a" style="left:1573px;top:338px;width:187px;height:1px;background:#474d5a;"></div>
<div class="a" style="left:1573px;top:355px;width:187px;height:1px;background:#474d5a;"></div>
<div class="a" style="left:1573px;top:372px;width:187px;height:1px;background:#474d5a;"></div>
<div class="a" style="left:1573px;top:389px;width:187px;height:1px;background:#474d5a;"></div>
<div class="a" style="left:1573px;top:405px;width:187px;height:1px;background:#474d5a;"></div>
<div class="a" style="left:1573px;top:422px;width:187px;height:1px;background:#474d5a;"></div>
<div class="a" style="left:1573px;top:439px;width:187px;height:1px;background:#474d5a;"></div>
<div class="a" style="left:1573px;top:456px;width:187px;height:1px;background:#474d5a;"></div>
<div class="a" style="left:1610px;top:321px;width:1px;height:150px;background:#474d5a;"></div>
<div class="t" style="left:1583.5px;top:324.2px;font-size:11px;color:#e8e8e8;transform:scaleX(1.125);transform-origin:0 0;">y/n</div>
<div class="t" style="left:1613.5px;top:324.2px;font-size:11px;color:#e8e8e8;transform:scaleX(0.835);transform-origin:0 0;">Name</div>
<div class="t" style="left:1612.5px;top:341.2px;font-size:11px;color:#eeeeee;transform:scaleX(0.858);transform-origin:0 0;">Basement</div>
<svg class="a" style="left:1589px;top:342.5px;" width="8" height="6" viewBox="0 0 8 6"><path d="M0.5 3 L3 5.5 L7.5 0.5" stroke="#f4f4f4" stroke-width="1.5" fill="none"/></svg>
<div class="t" style="left:1612.5px;top:357.7px;font-size:11px;color:#eeeeee;transform:scaleX(0.875);transform-origin:0 0;">Ground floor</div>
<svg class="a" style="left:1589px;top:359px;" width="8" height="6" viewBox="0 0 8 6"><path d="M0.5 3 L3 5.5 L7.5 0.5" stroke="#f4f4f4" stroke-width="1.5" fill="none"/></svg>
<div class="t" style="left:1612.5px;top:374.7px;font-size:11px;color:#eeeeee;transform:scaleX(0.840);transform-origin:0 0;">First floor</div>
<svg class="a" style="left:1589px;top:376px;" width="8" height="6" viewBox="0 0 8 6"><path d="M0.5 3 L3 5.5 L7.5 0.5" stroke="#f4f4f4" stroke-width="1.5" fill="none"/></svg>
<div class="t" style="left:1577.0px;top:482.3px;font-size:11px;color:#e0e0e0;transform:scaleX(0.921);transform-origin:0 0;">Length</div>
<div class="a" style="left:1617px;top:480px;width:42px;height:18px;background:#3b4151;border:1px solid #454c5c;"></div>
<div class="t" style="left:1650.0px;top:482.3px;font-size:11px;color:#6e7482;">0</div>
<div class="a" style="left:1666px;top:482px;width:12px;height:12px;border:1.5px solid #e8e8e8;"></div>
<svg class="a" style="left:1668px;top:484px;" width="8" height="8" viewBox="0 0 8 8"><path d="M0.5 4 L3 6.5 L7.5 1" stroke="#f4f4f4" stroke-width="1.4" fill="none"/></svg>
<div class="t" style="left:1681.0px;top:482.3px;font-size:11px;color:#e8e8e8;transform:scaleX(0.896);transform-origin:0 0;">show</div>
<div class="a" style="left:1567px;top:502px;width:200px;height:2px;background:#4a5066;"></div>
<div class="a" style="left:1572px;top:506px;width:190px;height:20px;background:#2f343e;"></div>
<svg class="a" style="left:1573px;top:508px;" width="16" height="16" viewBox="0 0 16 16"><rect x="2" y="0.5" width="13" height="15" fill="#e8eef6" stroke="#fff"/><path d="M4 4 H13 M4 8 H13 M4 12 H13 M8.5 2 V14" stroke="#3a80c8" stroke-width="1.3"/><path d="M0 16 L3 10 L2 13 L5 12 L2 16Z" fill="#f0c020"/></svg>
<div class="t" style="left:1592.0px;top:510.1px;font-size:11.5px;color:#f0f0f0;transform:scaleX(0.916);transform-origin:0 0;">Scheme generator, Potable water ...</div>
<div class="a" style="left:1499px;top:178px;width:11px;height:4px;background:#f0f0f0;"></div>
<svg class="a" style="left:1517px;top:173px;" width="11" height="11" viewBox="0 0 11 11"><rect x="3" y="0.8" width="7" height="7" fill="none" stroke="#eee" stroke-width="1.6"/><rect x="0.8" y="3" width="7" height="7" fill="#212830" stroke="#eee" stroke-width="1.6"/><rect x="3.3" y="5.5" width="2" height="2" fill="#eee"/></svg>
<svg class="a" style="left:1536px;top:174px;" width="10" height="9" viewBox="0 0 10 9"><path d="M1 0.8 L9 8.2 M9 0.8 L1 8.2" stroke="#f0f0f0" stroke-width="2"/></svg>
<div class="a" style="left:1522px;top:189px;width:30px;height:222px;background:#5b5f67;border-radius:4px;border:1px solid #6c7078"></div>
<svg class="a" style="left:1527px;top:205px;" width="20" height="20" viewBox="0 0 20 20"><path d="M10 1 L19 5 V15 L10 19 L1 15 V5 Z M1 5 L10 9 L19 5 M10 9 V19" stroke="#464a52" fill="none" stroke-width="1.2"/></svg>
<svg class="a" style="left:1527px;top:232px;" width="20" height="20" viewBox="0 0 20 20"><circle cx="10" cy="10" r="9" stroke="#464a52" fill="none" stroke-width="1.5"/><circle cx="10" cy="10" r="4" stroke="#464a52" fill="none" stroke-width="1.5"/></svg>
<svg class="a" style="left:1528px;top:268px;" width="18" height="22" viewBox="0 0 18 22"><path d="M4 12 V5 M7 10 V2 M10 10 V2 M13 10 V4 M4 12 C3 9 1 10 2 13 C4 18 7 21 12 21 C15 21 16 17 16 12 V7" stroke="#464a52" fill="none" stroke-width="1.3"/></svg>
<svg class="a" style="left:1527px;top:296px;" width="20" height="22" viewBox="0 0 20 22"><path d="M2 2 L8 8 M2 2 V6 M2 2 H6 M18 18 L12 12" stroke="#464a52" fill="none" stroke-width="1.3"/><circle cx="13" cy="13" r="4" stroke="#464a52" fill="none" stroke-width="1.3"/></svg>
<svg class="a" style="left:1527px;top:332px;" width="20" height="22" viewBox="0 0 20 22"><path d="M10 1 V21 M6 6 H14 M4 12 C4 16 16 16 16 12" stroke="#464a52" fill="none" stroke-width="1.5"/></svg>
<svg class="a" style="left:1526px;top:372px;" width="22" height="22" viewBox="0 0 22 22"><rect x="1" y="1" width="5" height="4" stroke="#464a52" fill="none"/><rect x="8" y="1" width="5" height="4" stroke="#464a52" fill="none"/><rect x="15" y="1" width="5" height="4" stroke="#464a52" fill="none"/><rect x="1" y="8" width="19" height="12" stroke="#464a52" fill="none"/><path d="M8 11 L14 14 L8 17 Z" fill="#464a52"/></svg>
<div class="a" style="left:0px;top:947px;width:1778px;height:53px;background:#ffffff;"></div>
<div class="a" style="left:0px;top:947px;width:1778px;height:1px;background:#1a1e24;"></div>
<svg class="a" style="left:5px;top:953px;" width="42" height="42" viewBox="0 0 42 42"><circle cx="21" cy="21" r="21" fill="#1f4753"/><path d="M13.5 10.5 L33 21 L13.5 31.5 Z" fill="#fff" stroke="#222" stroke-width="0.8"/></svg>
<div class="t" style="left:66.0px;top:968.6px;font-size:10.5px;color:#222222;transform:scaleX(0.897);transform-origin:0 0;">03:12 / 05:57</div>
<div class="a" style="left:143px;top:972px;width:1362px;height:4px;background:#d6d6d6;"></div>
<div class="a" style="left:143px;top:972px;width:732px;height:4px;background:#133a46;"></div>
<svg class="a" style="left:868px;top:967px;" width="14" height="14" viewBox="0 0 14 14"><circle cx="7" cy="7" r="6.5" fill="#133a46"/></svg>
<svg class="a" style="left:1604px;top:961px;" width="24" height="24" viewBox="0 0 24 24"><g fill="none" stroke="#1a1a1a" stroke-width="1.5"><path d="M10.5 1.5 H13.5 L14.2 4.5 L16.8 5.6 L19.4 3.9 L21.5 6 L19.8 8.6 L20.9 11.2 L23.5 12 V15 L20.9 15.8 L19.8 18.4 L21.5 21 L19.4 23 L16.8 21.4 L14.2 22.5 L13.5 25 H10.5 L9.8 22.5 L7.2 21.4 L4.6 23 L2.5 21 L4.2 18.4 L3.1 15.8 L0.5 15 V12 L3.1 11.2 L4.2 8.6 L2.5 6 L4.6 3.9 L7.2 5.6 L9.8 4.5 Z" transform="scale(0.96) translate(0,-1)"/><path d="M15 11 A3.5 3.5 0 1 1 10 9.5"/></g></svg>
<svg class="a" style="left:1647px;top:963px;" width="28" height="18" viewBox="0 0 28 18"><path d="M1 2 L8 9 L1 16 Z" fill="none" stroke="#999" stroke-width="1.3"/><path d="M8 2 L15 9 L8 16 Z" fill="none" stroke="#222" stroke-width="1.5"/><path d="M16 2 L24 9 L16 16 Z" fill="none" stroke="#222" stroke-width="1.6"/></svg>
<svg class="a" style="left:1696px;top:962px;" width="24" height="24" viewBox="0 0 24 24"><path d="M3 9 H6 L12 4 V20 L6 15 H3 Z" fill="none" stroke="#222" stroke-width="1.5"/><path d="M1 1 L23 23 M23 1 L1 23" stroke="#e06060" stroke-width="1.6"/></svg>
<svg class="a" style="left:1744px;top:962px;" width="22" height="22" viewBox="0 0 22 22"><g stroke="#111" stroke-width="1.6" fill="none"><path d="M13 9 L21 1 M13 3 V9 H19"/><path d="M9 13 L1 21 M3 13 H9 V19"/></g></svg>
<div class="a" style="left:405px;top:149px;width:968px;height:698px;background:rgba(0,0,0,0.25);border-radius:7px;"></div>
<div class="a" style="left:407px;top:151px;width:965px;height:694px;background:#f0eff3;border-radius:6px;border-bottom-left-radius:0;border-bottom-right-radius:0;border:1px solid #3a3d44;border-top:none"></div>
<div class="a" style="left:407px;top:151px;width:964px;height:29px;background:#fefefe;border-radius:6px 6px 0 0"></div>
<div class="a" style="left:407px;top:179px;width:964px;height:1px;background:#e6e5ea;"></div>
<div class="a" style="left:1368px;top:180px;width:2px;height:663px;background:#fbfbfd;"></div>
<svg class="a" style="left:415px;top:156px;" width="16" height="16" viewBox="0 0 16 16"><rect x="0" y="0" width="16" height="16" fill="#1e4f5a"/><path d="M4 13 V6 C4 3.5 5.5 2.5 8 2.5 C10.5 2.5 12 3.5 12 6 V13 H10 V6.5 C10 5 9.3 4.5 8 4.5 C6.7 4.5 6 5 6 6.5 V13 Z" fill="#f4f4f4"/></svg>
<div class="t" style="left:434.4px;top:159.0px;font-size:12px;color:#111;transform:scaleX(0.905);transform-origin:0 0;">Scheme generator, Potable water</div>
<div class="t" style="left:1304.5px;top:158.9px;font-size:12.5px;color:#111;transform:scaleX(0.935);transform-origin:0 0;">?</div>
<svg class="a" style="left:1344px;top:159px;" width="11" height="11" viewBox="0 0 11 11"><path d="M0.5 0.5 L10.5 10.5 M10.5 0.5 L0.5 10.5" stroke="#111" stroke-width="1.2"/></svg>
<div class="a" style="left:416px;top:186px;width:183px;height:578px;border:1px solid #5a5a5e;"></div>
<div class="a" style="left:600px;top:186px;width:1px;height:578px;background:#fafafa;"></div>
<div class="a" style="left:419px;top:192px;width:176px;height:19px;background:#fbfbfb;border:1px solid #c6c6ca;border-radius:2px;"></div>
<div class="t" style="left:421.5px;top:196.7px;font-size:11px;color:#111;transform:scaleX(0.861);transform-origin:0 0;">Symbols EN 806</div>
<svg class="a" style="left:583px;top:199px;" width="8" height="5" viewBox="0 0 8 5"><path d="M0.5 0.5 L4 4 L7.5 0.5" stroke="#444" stroke-width="1" fill="none"/></svg>
<div class="a" style="left:419px;top:216px;width:33px;height:36px;background:#fbfbfc;border:1px solid #cfcfd3;border-radius:3px;"></div>
<svg class="a" style="left:419px;top:216px;" width="33" height="36" viewBox="0 0 33 36"><path d="M9.5 18 H23.5 C21.5 22.9 18.5 25 16.5 25 C14.5 25 11.5 22.9 9.5 18 Z" fill="none" stroke="#111" stroke-width="1.6"/><path d="M16.5 25 V27.5" stroke="#111" stroke-width="1.6"/><path d="M0 30.5 H33" stroke="#7a1f2a" stroke-width="1.3"/></svg>
<div class="a" style="left:455px;top:216px;width:33px;height:36px;background:#fbfbfc;border:1px solid #cfcfd3;border-radius:3px;"></div>
<svg class="a" style="left:455px;top:216px;" width="33" height="36" viewBox="0 0 33 36"><path d="M14 14 H16 M17 14 H19" stroke="#111" stroke-width="1.6" fill="none"/><path d="M9.5 18 H23.5 C21.5 22.9 18.5 25 16.5 25 C14.5 25 11.5 22.9 9.5 18 Z" fill="none" stroke="#111" stroke-width="1.6"/><path d="M16.5 25 V27.5" stroke="#111" stroke-width="1.6"/><path d="M0 30.5 H33" stroke="#7a1f2a" stroke-width="1.3"/></svg>
<div class="a" style="left:491px;top:216px;width:33px;height:36px;background:#fbfbfc;border:1px solid #cfcfd3;border-radius:3px;"></div>
<svg class="a" style="left:491px;top:216px;" width="33" height="36" viewBox="0 0 33 36"><rect x="11.5" y="3.5" width="11" height="8" fill="none" stroke="#111" stroke-width="1.4"/><path d="M9.5 18 H23.5 C21.5 22.9 18.5 25 16.5 25 C14.5 25 11.5 22.9 9.5 18 Z" fill="none" stroke="#111" stroke-width="1.6"/><path d="M16.5 25 V27.5" stroke="#111" stroke-width="1.6"/><path d="M0 30.5 H33" stroke="#7a1f2a" stroke-width="1.3"/></svg>
<div class="a" style="left:527px;top:216px;width:33px;height:36px;background:#fbfbfc;border:1px solid #cfcfd3;border-radius:3px;"></div>
<svg class="a" style="left:527px;top:216px;" width="33" height="36" viewBox="0 0 33 36"><rect x="11.5" y="3.5" width="11" height="8" fill="none" stroke="#111" stroke-width="1.4"/><path d="M10 15 H23" stroke="#111" stroke-width="1.6" fill="none"/><path d="M10.0 17.5 H23.0 C21.0 22.4 18.5 24.5 16.5 24.5 C14.5 24.5 12.0 22.4 10.0 17.5 Z" fill="none" stroke="#111" stroke-width="1.6"/><path d="M16.5 24.5 V27.0" stroke="#111" stroke-width="1.6"/><path d="M0 30.5 H33" stroke="#7a1f2a" stroke-width="1.3"/></svg>
<div class="a" style="left:563px;top:216px;width:33px;height:36px;background:#fbfbfc;border:1px solid #cfcfd3;border-radius:3px;"></div>
<svg class="a" style="left:563px;top:216px;" width="33" height="36" viewBox="0 0 33 36"><path d="M11.5 18.5 H21.5 C19.5 22.35 18.5 24.0 16.5 24.0 C14.5 24.0 13.5 22.35 11.5 18.5 Z" fill="none" stroke="#111" stroke-width="1.6"/><path d="M16.5 24.0 V26.5" stroke="#111" stroke-width="1.6"/><path d="M0 30.5 H33" stroke="#7a1f2a" stroke-width="1.3"/></svg>
<div class="a" style="left:419px;top:256px;width:33px;height:36px;background:#fbfbfc;border:1px solid #cfcfd3;border-radius:3px;"></div>
<svg class="a" style="left:419px;top:256px;" width="33" height="36" viewBox="0 0 33 36"><rect x="11" y="4" width="11" height="8" fill="none" stroke="#111" stroke-width="1.4"/><path d="M11.5 19 H21.5 C19.5 22.5 18.5 24 16.5 24 C14.5 24 13.5 22.5 11.5 19 Z" fill="none" stroke="#111" stroke-width="1.6"/><path d="M16.5 24 V26.5" stroke="#111" stroke-width="1.6"/><path d="M0 30.5 H33" stroke="#7a1f2a" stroke-width="1.3"/></svg>
<div class="a" style="left:455px;top:256px;width:33px;height:36px;background:#fbfbfc;border:1px solid #cfcfd3;border-radius:3px;"></div>
<svg class="a" style="left:455px;top:256px;" width="33" height="36" viewBox="0 0 33 36"><rect x="11" y="2" width="10" height="8" fill="none" stroke="#111" stroke-width="1.4"/><path d="M10 12.5 H22" stroke="#111" stroke-width="1.8" fill="none"/><path d="M11.5 16 H21.5 C19.5 19.5 18.5 21 16.5 21 C14.5 21 13.5 19.5 11.5 16 Z" fill="none" stroke="#111" stroke-width="1.6"/><path d="M16.5 21 V23.5" stroke="#111" stroke-width="1.6"/><path d="M0 30.5 H33" stroke="#7a1f2a" stroke-width="1.3"/></svg>
<div class="a" style="left:491px;top:256px;width:33px;height:36px;background:#fbfbfc;border:1px solid #cfcfd3;border-radius:3px;"></div>
<svg class="a" style="left:491px;top:256px;" width="33" height="36" viewBox="0 0 33 36"><path d="M12.0 21 H20.0 C18.0 24.5 18 26 16 26 C14 26 14.0 24.5 12.0 21 Z" fill="none" stroke="#111" stroke-width="1.6"/><path d="M16 26 V28.5" stroke="#111" stroke-width="1.6"/><rect x="18" y="26" width="3" height="3" fill="#111"/><path d="M0 30.5 H33" stroke="#7a1f2a" stroke-width="1.3"/></svg>
<div class="a" style="left:527px;top:256px;width:33px;height:36px;background:#fbfbfc;border:1px solid #cfcfd3;border-radius:3px;"></div>
<svg class="a" style="left:527px;top:256px;" width="33" height="36" viewBox="0 0 33 36"><path d="M4 21 H29 C28 24 25 27 23 27 L19 23 L16 23 L12 27 C9 27 6 24 4 21Z" fill="none" stroke="#111" stroke-width="1.5"/><path d="M0 30.5 H33" stroke="#7a1f2a" stroke-width="1.3"/></svg>
<div class="a" style="left:563px;top:256px;width:33px;height:36px;background:#fbfbfc;border:1px solid #cfcfd3;border-radius:3px;"></div>
<svg class="a" style="left:563px;top:256px;" width="33" height="36" viewBox="0 0 33 36"><rect x="12" y="10" width="9" height="4" fill="none" stroke="#111" stroke-width="1.4"/><path d="M16.5 14 V18" stroke="#111" stroke-width="1.8" fill="none"/><path d="M0 30.5 H33" stroke="#7a1f2a" stroke-width="1.3"/></svg>
<div class="a" style="left:419px;top:296px;width:33px;height:36px;background:#fbfbfc;border:1px solid #cfcfd3;border-radius:3px;"></div>
<svg class="a" style="left:419px;top:296px;" width="33" height="36" viewBox="0 0 33 36"><rect x="14.5" y="5" width="3" height="3" fill="#111"/><rect x="12" y="15" width="9" height="4" fill="none" stroke="#111" stroke-width="1.4"/><path d="M16.5 19 V22" stroke="#111" stroke-width="1.6" fill="none"/><path d="M0 30.5 H33" stroke="#7a1f2a" stroke-width="1.3"/></svg>
<div class="a" style="left:455px;top:296px;width:33px;height:36px;background:#fbfbfc;border:1px solid #cfcfd3;border-radius:3px;"></div>
<svg class="a" style="left:455px;top:296px;" width="33" height="36" viewBox="0 0 33 36"><path d="M5 10 H12 V14 H26 V10 H12" stroke="#111" stroke-width="1.3" fill="none"/><path d="M19 14 V18" stroke="#111" stroke-width="1.8" fill="none"/><path d="M0 30.5 H33" stroke="#7a1f2a" stroke-width="1.3"/></svg>
<div class="a" style="left:491px;top:296px;width:33px;height:36px;background:#fbfbfc;border:1px solid #cfcfd3;border-radius:3px;"></div>
<svg class="a" style="left:491px;top:296px;" width="33" height="36" viewBox="0 0 33 36"><rect x="5" y="11" width="22" height="4" fill="none" stroke="#111" stroke-width="1.4"/><path d="M16.5 10 V18" stroke="#111" stroke-width="1.4" fill="none"/><path d="M0 30.5 H33" stroke="#7a1f2a" stroke-width="1.3"/></svg>
<div class="a" style="left:527px;top:296px;width:33px;height:36px;background:#fbfbfc;border:1px solid #cfcfd3;border-radius:3px;"></div>
<svg class="a" style="left:527px;top:296px;" width="33" height="36" viewBox="0 0 33 36"><path d="M5 14 H16" stroke="#111" stroke-width="1.2" fill="none"/><rect x="16" y="15" width="11" height="5" fill="none" stroke="#111" stroke-width="1.4"/><rect x="22" y="19" width="4" height="3" fill="#111"/><path d="M0 30.5 H33" stroke="#7a1f2a" stroke-width="1.3"/></svg>
<div class="a" style="left:563px;top:296px;width:33px;height:36px;background:#fbfbfc;border:1px solid #cfcfd3;border-radius:3px;"></div>
<svg class="a" style="left:563px;top:296px;" width="33" height="36" viewBox="0 0 33 36"><rect x="4" y="15" width="25" height="5" fill="none" stroke="#111" stroke-width="1.4"/><path d="M16.5 15 V20" stroke="#111" stroke-width="1.4" fill="none"/><rect x="17" y="19" width="4" height="3" fill="#111"/><path d="M0 30.5 H33" stroke="#7a1f2a" stroke-width="1.3"/></svg>
<div class="a" style="left:419px;top:335px;width:33px;height:36px;background:#fbfbfc;border:1px solid #cfcfd3;border-radius:3px;"></div>
<svg class="a" style="left:419px;top:335px;" width="33" height="36" viewBox="0 0 33 36"><rect x="3" y="13" width="14" height="18" fill="none" stroke="#111" stroke-width="1.4"/><rect x="3" y="13" width="27" height="6" fill="none" stroke="#111" stroke-width="1.4"/><path d="M17 19 V31 M8 24 C8 22 12 22 12 24 M10 23 V28" stroke="#111" stroke-width="1.4" fill="none"/><path d="M22 17 V21" stroke="#111" stroke-width="1.6" fill="none"/><path d="M23 9 L24 7" stroke="#111" stroke-width="0.8" fill="none"/><path d="M0 31 H33" stroke="#7a1f2a" stroke-width="1.3"/></svg>
<div class="a" style="left:455px;top:335px;width:33px;height:36px;background:#fbfbfc;border:1px solid #cfcfd3;border-radius:3px;"></div>
<svg class="a" style="left:455px;top:335px;" width="33" height="36" viewBox="0 0 33 36"><rect x="3" y="13" width="14" height="18" fill="none" stroke="#111" stroke-width="1.4"/><rect x="3" y="13" width="27" height="6" fill="none" stroke="#111" stroke-width="1.4"/><path d="M17 19 V31 M8 24 C8 22 12 22 12 24 M10 23 V28" stroke="#111" stroke-width="1.4" fill="none"/><path d="M22 17 V21" stroke="#111" stroke-width="1.6" fill="none"/><rect x="23" y="20" width="4" height="3" fill="#111"/><path d="M0 31 H33" stroke="#7a1f2a" stroke-width="1.3"/></svg>
<div class="a" style="left:491px;top:335px;width:33px;height:36px;background:#fbfbfc;border:1px solid #cfcfd3;border-radius:3px;"></div>
<svg class="a" style="left:491px;top:335px;" width="33" height="36" viewBox="0 0 33 36"><rect x="5" y="9" width="21" height="22" fill="none" stroke="#111" stroke-width="1.4"/><path d="M15.5 13 V24 M9 17 C10 14 21 14 22 17 M9 17 L8 19 M22 17 L23 19" stroke="#111" stroke-width="1.4" fill="none"/><path d="M26 8 L28 6" stroke="#111" stroke-width="0.8" fill="none"/><path d="M0 31 H33" stroke="#7a1f2a" stroke-width="1.3"/></svg>
<div class="a" style="left:527px;top:335px;width:33px;height:36px;background:#fbfbfc;border:1px solid #cfcfd3;border-radius:3px;"></div>
<svg class="a" style="left:527px;top:335px;" width="33" height="36" viewBox="0 0 33 36"><rect x="5" y="9" width="21" height="22" fill="none" stroke="#111" stroke-width="1.4"/><circle cx="15.5" cy="20" r="7.5" fill="none" stroke="#111" stroke-width="1" stroke-dasharray="1.4 0.6"/><path d="M26 8 L28 6" stroke="#111" stroke-width="0.8" fill="none"/><path d="M0 31 H33" stroke="#7a1f2a" stroke-width="1.3"/></svg>
<div class="a" style="left:419px;top:375px;width:33px;height:36px;background:#fbfbfc;border:1px solid #cfcfd3;border-radius:3px;"></div>
<svg class="a" style="left:419px;top:375px;" width="33" height="36" viewBox="0 0 33 36"><rect x="12" y="8" width="8" height="10" fill="none" stroke="#111" stroke-width="1.4"/><path d="M12.0 19 H21.0 L16.5 27 Z" fill="none" stroke="#111" stroke-width="1.5"/><path d="M0 30 H33" stroke="#7a1f2a" stroke-width="1.3"/></svg>
<div class="a" style="left:455px;top:375px;width:33px;height:36px;background:#fbfbfc;border:1px solid #cfcfd3;border-radius:3px;"></div>
<svg class="a" style="left:455px;top:375px;" width="33" height="36" viewBox="0 0 33 36"><rect x="11" y="5" width="10" height="10" fill="none" stroke="#111" stroke-width="1.4"/><path d="M13 8 H16" stroke="#111" stroke-width="1.4" fill="none"/><path d="M11.5 17 H21.5 L16.5 28 Z" fill="none" stroke="#111" stroke-width="1.5"/><path d="M27 2 V6" stroke="#111" stroke-width="1.3" fill="none"/><path d="M0 30 H33" stroke="#7a1f2a" stroke-width="1.3"/></svg>
<div class="a" style="left:491px;top:375px;width:33px;height:36px;background:#fbfbfc;border:1px solid #cfcfd3;border-radius:3px;"></div>
<svg class="a" style="left:491px;top:375px;" width="33" height="36" viewBox="0 0 33 36"><rect x="12" y="9" width="8" height="9" fill="none" stroke="#111" stroke-width="1.3" stroke-dasharray="2 1.5"/><path d="M12.5 18 H20.5 L16.5 28 Z" fill="none" stroke="#111" stroke-width="1.5"/><path d="M0 30 H33" stroke="#7a1f2a" stroke-width="1.3"/></svg>
<div class="a" style="left:527px;top:375px;width:33px;height:36px;background:#fbfbfc;border:1px solid #cfcfd3;border-radius:3px;"></div>
<svg class="a" style="left:527px;top:375px;" width="33" height="36" viewBox="0 0 33 36"><path d="M12.0 19 H21.0 L16.5 27 Z" fill="none" stroke="#111" stroke-width="1.5"/><path d="M0 30 H33" stroke="#7a1f2a" stroke-width="1.3"/></svg>
<div class="a" style="left:563px;top:375px;width:33px;height:36px;background:#fbfbfc;border:1px solid #cfcfd3;border-radius:3px;"></div>
<svg class="a" style="left:563px;top:375px;" width="33" height="36" viewBox="0 0 33 36"><path d="M12.5 20 H20.5 L16.5 26 Z" fill="none" stroke="#111" stroke-width="1.5"/><path d="M0 30 H33" stroke="#7a1f2a" stroke-width="1.3"/></svg>
<div class="a" style="left:419px;top:415px;width:33px;height:36px;background:#fbfbfc;border:1px solid #cfcfd3;border-radius:3px;"></div>
<svg class="a" style="left:419px;top:415px;" width="33" height="36" viewBox="0 0 33 36"><rect x="12" y="13" width="9" height="4" fill="none" stroke="#111" stroke-width="1.4"/><path d="M12.0 17 H21.0 L16.5 24 Z" fill="none" stroke="#111" stroke-width="1.5"/><path d="M0 29.5 H33" stroke="#7a1f2a" stroke-width="1.3"/></svg>
<div class="a" style="left:455px;top:415px;width:33px;height:36px;background:#fbfbfc;border:1px solid #cfcfd3;border-radius:3px;"></div>
<svg class="a" style="left:455px;top:415px;" width="33" height="36" viewBox="0 0 33 36"><rect x="13" y="11" width="7" height="6" fill="none" stroke="#111" stroke-width="1.4"/><path d="M12.5 17 H20.5 L16.5 24 Z" fill="none" stroke="#111" stroke-width="1.5"/><path d="M16 12 V15" stroke="#111" stroke-width="1.4" fill="none"/><path d="M0 29.5 H33" stroke="#7a1f2a" stroke-width="1.3"/></svg>
<div class="a" style="left:419px;top:455px;width:33px;height:36px;background:#fbfbfc;border:1px solid #cfcfd3;border-radius:3px;"></div>
<svg class="a" style="left:419px;top:455px;" width="33" height="36" viewBox="0 0 33 36"><path d="M3 22 H28 V27 H22 L20 29 H10 Z" fill="none" stroke="#111" stroke-width="1.4"/><path d="M0 30 H33" stroke="#7a1f2a" stroke-width="1.3"/></svg>
<div class="a" style="left:455px;top:455px;width:33px;height:36px;background:#fbfbfc;border:1px solid #cfcfd3;border-radius:3px;"></div>
<svg class="a" style="left:455px;top:455px;" width="33" height="36" viewBox="0 0 33 36"><rect x="7" y="23" width="19" height="5" fill="none" stroke="#111" stroke-width="1.4"/><path d="M0 30 H33" stroke="#7a1f2a" stroke-width="1.3"/></svg>
<div class="a" style="left:491px;top:455px;width:33px;height:36px;background:#fbfbfc;border:1px solid #cfcfd3;border-radius:3px;"></div>
<svg class="a" style="left:491px;top:455px;" width="33" height="36" viewBox="0 0 33 36"><circle cx="7" cy="8" r="2" fill="none" stroke="#111" stroke-width="1.2"/><circle cx="26" cy="8" r="2" fill="none" stroke="#111" stroke-width="1.2"/><path d="M7 10 V12 H26 V10 M16.5 12 V34" stroke="#111" stroke-width="1.4" fill="none"/><rect x="15" y="24" width="3" height="6" fill="none" stroke="#111" stroke-width="1.2"/></svg>
<div class="a" style="left:527px;top:455px;width:33px;height:36px;background:#fbfbfc;border:1px solid #cfcfd3;border-radius:3px;"></div>
<svg class="a" style="left:527px;top:455px;" width="33" height="36" viewBox="0 0 33 36"><path d="M16.5 2 V20 M14 17 L16.5 20 L19 17 M15 22 C18 23 15 26 18 27 M16 30 L14 32" stroke="#111" stroke-width="1.3" fill="none"/></svg>
<div class="a" style="left:563px;top:455px;width:33px;height:36px;background:#fbfbfc;border:1px solid #cfcfd3;border-radius:3px;"></div>
<svg class="a" style="left:563px;top:455px;" width="33" height="36" viewBox="0 0 33 36"><path d="M16.5 4 V34" stroke="#111" stroke-width="1.4" fill="none"/><rect x="15" y="17" width="3" height="5" fill="none" stroke="#111" stroke-width="1.2"/></svg>
<div class="a" style="left:419px;top:495px;width:33px;height:36px;background:#fbfbfc;border:1px solid #cfcfd3;border-radius:3px;"></div>
<svg class="a" style="left:419px;top:495px;" width="33" height="36" viewBox="0 0 33 36"><rect x="4" y="4" width="25" height="25" fill="none" stroke="#111" stroke-width="1.6"/><rect x="8" y="6" width="5" height="20" fill="none" stroke="#111" stroke-width="1.2"/><rect x="12" y="8" width="6" height="5" fill="none" stroke="#111" stroke-width="1.2"/><path d="M18 11 H24 V26 M14 13 V26" stroke="#111" stroke-width="1.2" fill="none"/><path d="M0 30 H33" stroke="#7a1f2a" stroke-width="1.3"/></svg>
<div class="a" style="left:455px;top:495px;width:33px;height:36px;background:#fbfbfc;border:1px solid #cfcfd3;border-radius:3px;"></div>
<svg class="a" style="left:455px;top:495px;" width="33" height="36" viewBox="0 0 33 36"><rect x="4" y="4" width="25" height="25" fill="none" stroke="#111" stroke-width="1.6"/><rect x="8" y="6" width="5" height="20" fill="none" stroke="#111" stroke-width="1.2"/><rect x="12" y="8" width="6" height="5" fill="none" stroke="#111" stroke-width="1.2"/><path d="M18 11 H24 V26 M14 13 V26" stroke="#111" stroke-width="1.2" fill="none"/><path d="M0 30 H33" stroke="#7a1f2a" stroke-width="1.3"/></svg>
<div class="a" style="left:491px;top:495px;width:33px;height:36px;background:#fbfbfc;border:1px solid #cfcfd3;border-radius:3px;"></div>
<svg class="a" style="left:491px;top:495px;" width="33" height="36" viewBox="0 0 33 36"><path d="M11 8 C11 5 14 3 16.5 3 C19 3 22 5 22 8 V27 C22 30 19 31 16.5 31 C14 31 11 30 11 27 Z" fill="none" stroke="#111" stroke-width="1.3"/><path d="M22 8 H27 M22 16 H27 M6 27 H11 M14 35 L16.5 31 L19 35 M22 30 H24" stroke="#111" stroke-width="1.2" fill="none"/></svg>
<div class="a" style="left:527px;top:495px;width:33px;height:36px;background:#fbfbfc;border:1px solid #cfcfd3;border-radius:3px;"></div>
<svg class="a" style="left:527px;top:495px;" width="33" height="36" viewBox="0 0 33 36"><path d="M11 6 C11 4 14 2 16.5 2 C19 2 22 4 22 6 V28 C22 30 19 32 16.5 32 C14 32 11 30 11 28 Z" fill="none" stroke="#111" stroke-width="1.3"/><path d="M22 8 H27 M22 16 H27 M5 12 H11 M5 20 H11 M5 26 H11 M11 12 L20 10 L13 16 L20 15" stroke="#111" stroke-width="1.2" fill="none"/></svg>
<div class="a" style="left:563px;top:495px;width:33px;height:36px;background:#fbfbfc;border:1px solid #cfcfd3;border-radius:3px;"></div>
<svg class="a" style="left:563px;top:495px;" width="33" height="36" viewBox="0 0 33 36"><rect x="2" y="4" width="29" height="25" fill="none" stroke="#111" stroke-width="1.6"/><rect x="5" y="6" width="5" height="20" fill="none" stroke="#111" stroke-width="1.2"/><rect x="9" y="7" width="7" height="5" fill="none" stroke="#111" stroke-width="1.2"/><path d="M16 10 H23 V26 M12 12 V26 M25 10 V26 H30" stroke="#111" stroke-width="1.2" fill="none"/><path d="M15 22 L17 24 L19 22 M22 22 L24 24 L26 22" stroke="#111" stroke-width="1" fill="none"/></svg>
<div class="a" style="left:419px;top:534px;width:33px;height:36px;background:#fbfbfc;border:1px solid #cfcfd3;border-radius:3px;"></div>
<svg class="a" style="left:419px;top:534px;" width="33" height="36" viewBox="0 0 33 36"><rect x="6" y="5" width="21" height="23" fill="none" stroke="#111" stroke-width="1.5"/><rect x="12" y="15" width="8" height="6" fill="none" stroke="#111" stroke-width="1.2"/><path d="M13 19 L15 17 L17 19 L19 17 M16 21 V28" stroke="#111" stroke-width="1" fill="none"/></svg>
<div class="a" style="left:455px;top:534px;width:33px;height:36px;background:#fbfbfc;border:1px solid #cfcfd3;border-radius:3px;"></div>
<svg class="a" style="left:455px;top:534px;" width="33" height="36" viewBox="0 0 33 36"><rect x="12" y="4" width="8" height="16" fill="none" stroke="#111" stroke-width="1.4"/><path d="M14 10 H18 M16 8 V12 M14 16 H18" stroke="#111" stroke-width="1.2" fill="none"/><path d="M0 30 H33" stroke="#7a1f2a" stroke-width="1.3"/></svg>
<div class="a" style="left:491px;top:534px;width:33px;height:36px;background:#fbfbfc;border:1px solid #cfcfd3;border-radius:3px;"></div>
<svg class="a" style="left:491px;top:534px;" width="33" height="36" viewBox="0 0 33 36"><rect x="12" y="8" width="8" height="11" fill="none" stroke="#111" stroke-width="1.3"/><path d="M15 11 H17 V15 M15 17 H19" stroke="#111" stroke-width="1" fill="none"/><path d="M0 30 H33" stroke="#7a1f2a" stroke-width="1.3"/></svg>
<div class="a" style="left:527px;top:534px;width:33px;height:36px;background:#fbfbfc;border:1px solid #cfcfd3;border-radius:3px;"></div>
<svg class="a" style="left:527px;top:534px;" width="33" height="36" viewBox="0 0 33 36"><rect x="14" y="19" width="6" height="6" fill="none" stroke="#111" stroke-width="1.2"/><path d="M15 24 L16 26" stroke="#111" stroke-width="1" fill="none"/><path d="M0 30 H33" stroke="#7a1f2a" stroke-width="1.3"/></svg>
<div class="a" style="left:419px;top:574px;width:33px;height:36px;background:#fbfbfc;border:1px solid #cfcfd3;border-radius:3px;"></div>
<svg class="a" style="left:419px;top:574px;" width="33" height="36" viewBox="0 0 33 36"><path d="M3 7 H28 V12 M3 12 V7" fill="none" stroke="#111" stroke-width="1.6"/><rect x="6" y="11" width="6" height="8" fill="none" stroke="#111" stroke-width="1.5"/><rect x="15" y="11" width="6" height="8" fill="none" stroke="#111" stroke-width="1.5"/><path d="M8 19 V26 C8 28 9 29 11 29 H33 M17 19 V24 C17 26 18 27 20 27 H33" stroke="#7a1f2a" stroke-width="1.2" fill="none"/><path d="M8 19 V26 M17 19 V24" stroke="#111" stroke-width="1.2" fill="none"/></svg>
<div class="a" style="left:455px;top:574px;width:33px;height:36px;background:#fbfbfc;border:1px solid #cfcfd3;border-radius:3px;"></div>
<svg class="a" style="left:455px;top:574px;" width="33" height="36" viewBox="0 0 33 36"><path d="M3 7 H26 V12 M3 12 V7" fill="none" stroke="#111" stroke-width="1.6"/><rect x="6" y="11" width="6" height="8" fill="none" stroke="#111" stroke-width="1.5"/><rect x="14" y="11" width="6" height="8" fill="none" stroke="#111" stroke-width="1.5"/><path d="M9 19 V28 H29 V12 M17 19 V25 H26 V13" stroke="#111" stroke-width="1.2" fill="none"/><path d="M26 20 V26" stroke="#7a1f2a" stroke-width="1.2" fill="none"/></svg>
<div class="a" style="left:491px;top:574px;width:33px;height:36px;background:#fbfbfc;border:1px solid #cfcfd3;border-radius:3px;"></div>
<svg class="a" style="left:491px;top:574px;" width="33" height="36" viewBox="0 0 33 36"><rect x="11" y="16" width="5" height="5" fill="none" stroke="#111" stroke-width="1.3"/><rect x="16" y="17" width="6" height="4" fill="none" stroke="#111" stroke-width="1.3"/></svg>
<div class="a" style="left:527px;top:574px;width:33px;height:36px;background:#fbfbfc;border:1px solid #cfcfd3;border-radius:3px;"></div>
<svg class="a" style="left:527px;top:574px;" width="33" height="36" viewBox="0 0 33 36"><path d="M8 25 H13 M10.5 23 V25" stroke="#111" stroke-width="1.2" fill="none"/><rect x="15" y="14" width="5" height="6" fill="none" stroke="#111" stroke-width="1.3"/><rect x="20" y="15" width="6" height="4" fill="none" stroke="#111" stroke-width="1.3"/></svg>
<div class="a" style="left:419px;top:614px;width:33px;height:36px;background:#fbfbfc;border:1px solid #cfcfd3;border-radius:3px;"></div>
<svg class="a" style="left:419px;top:614px;" width="33" height="36" viewBox="0 0 33 36"><path d="M3 30 H29 M11 30 V24.5 H29" stroke="#7a1f2a" stroke-width="1.4" fill="none"/></svg>
<div class="a" style="left:455px;top:614px;width:33px;height:36px;background:#fbfbfc;border:1px solid #cfcfd3;border-radius:3px;"></div>
<svg class="a" style="left:455px;top:614px;" width="33" height="36" viewBox="0 0 33 36"><path d="M3 30 H29 M3 25 H29 M16.5 25 V30" stroke="#7a1f2a" stroke-width="1.4" fill="none"/></svg>
<div class="a" style="left:491px;top:614px;width:33px;height:36px;background:#fbfbfc;border:1px solid #cfcfd3;border-radius:3px;"></div>
<svg class="a" style="left:491px;top:614px;" width="33" height="36" viewBox="0 0 33 36"><path d="M3 30 H29 M3 25 H20 V30" stroke="#7a1f2a" stroke-width="1.4" fill="none"/></svg>
<div class="a" style="left:527px;top:614px;width:33px;height:36px;background:#fbfbfc;border:1px solid #cfcfd3;border-radius:3px;"></div>
<svg class="a" style="left:527px;top:614px;" width="33" height="36" viewBox="0 0 33 36"><path d="M3 30 H29 M16.5 17 V30" stroke="#7a1f2a" stroke-width="1.4" fill="none"/></svg>
<div class="a" style="left:563px;top:614px;width:33px;height:36px;background:#fbfbfc;border:1px solid #cfcfd3;border-radius:3px;"></div>
<svg class="a" style="left:563px;top:614px;" width="33" height="36" viewBox="0 0 33 36"><path d="M4 17 H29 M16.5 17 V30" stroke="#7a1f2a" stroke-width="1.6" fill="none"/></svg>
<div class="a" style="left:419px;top:654px;width:33px;height:36px;background:#fbfbfc;border:1px solid #cfcfd3;border-radius:3px;"></div>
<svg class="a" style="left:419px;top:654px;" width="33" height="36" viewBox="0 0 33 36"><circle cx="8" cy="18" r="5" fill="none" stroke="#111" stroke-width="1.8"/><path d="M13 18 H28 M16 15 L13 18 L16 21" stroke="#111" stroke-width="1.2" fill="none"/></svg>
<div class="a" style="left:455px;top:654px;width:33px;height:36px;background:#fbfbfc;border:1px solid #cfcfd3;border-radius:3px;"></div>
<svg class="a" style="left:455px;top:654px;" width="33" height="36" viewBox="0 0 33 36"><rect x="6" y="4" width="21" height="28" fill="none" stroke="#111" stroke-width="1.5"/><path d="M6 10 H27 M13 24 V20 C13 19 17 19 17 20 V24 M19 18 V16" stroke="#111" stroke-width="1.2" fill="none"/></svg>
<div class="a" style="left:491px;top:654px;width:33px;height:36px;background:#fbfbfc;border:1px solid #cfcfd3;border-radius:3px;"></div>
<svg class="a" style="left:491px;top:654px;" width="33" height="36" viewBox="0 0 33 36"><rect x="5" y="4" width="23" height="28" fill="none" stroke="#111" stroke-width="1.6"/><rect x="8" y="16" width="17" height="14" fill="none" stroke="#111" stroke-width="1.2"/><path d="M12 6 L21 12 M21 6 L12 12" stroke="#111" stroke-width="1.2" fill="none"/><rect x="13" y="18" width="7" height="3" fill="none" stroke="#111" stroke-width="1.1"/><text x="10.5" y="28" font-size="7" fill="#7a1f2a" font-family="Liberation Serif">Σm</text></svg>
<div class="a" style="left:419px;top:694px;width:33px;height:36px;background:#fbfbfc;border:1px solid #cfcfd3;border-radius:3px;"></div>
<svg class="a" style="left:419px;top:694px;" width="33" height="36" viewBox="0 0 33 36"><path d="M5 8 L15 15 L5 22 Z M25 8 L15 15 L25 22 Z" stroke="#111" stroke-width="1.3" fill="none"/><path d="M20 29 V25 H23 V27 H26" stroke="#111" stroke-width="1.4" fill="none"/></svg>
<div class="a" style="left:455px;top:694px;width:33px;height:36px;background:#fbfbfc;border:1px solid #cfcfd3;border-radius:3px;"></div>
<svg class="a" style="left:455px;top:694px;" width="33" height="36" viewBox="0 0 33 36"><path d="M11 2 H22 M16.5 2 V14 M4 13 L29 25 V13 L4 25 Z" stroke="#111" stroke-width="1.4" fill="none"/><circle cx="16.5" cy="14" r="2.5" fill="none" stroke="#111" stroke-width="1.1"/></svg>
<div class="a" style="left:491px;top:694px;width:33px;height:36px;background:#fbfbfc;border:1px solid #cfcfd3;border-radius:3px;"></div>
<svg class="a" style="left:491px;top:694px;" width="33" height="36" viewBox="0 0 33 36"><path d="M4 29 H28 M8 6 V11 M16 6 V11 M24 6 V11 M8 26 V29 M16 26 V29 M24 26 V29" stroke="#111" stroke-width="1.1" fill="none"/><path d="M5.5 11 H10.5 L5.5 19 H10.5 Z M5.5 19 H10.5 L5.5 26 H10.5" stroke="#111" stroke-width="0.9" fill="none"/><path d="M13.5 11 H18.5 L13.5 19 H18.5 Z M13.5 19 H18.5 L13.5 26 H18.5" stroke="#111" stroke-width="0.9" fill="none"/><path d="M21.5 11 H26.5 L21.5 19 H26.5 Z M21.5 19 H26.5 L21.5 26 H26.5" stroke="#111" stroke-width="0.9" fill="none"/></svg>
<div class="a" style="left:527px;top:694px;width:33px;height:36px;background:#fbfbfc;border:1px solid #cfcfd3;border-radius:3px;"></div>
<svg class="a" style="left:527px;top:694px;" width="33" height="36" viewBox="0 0 33 36"><path d="M2 18 H31" stroke="#111" stroke-width="1.1" fill="none"/><rect x="9" y="13" width="6" height="9" fill="none" stroke="#111" stroke-width="1.5"/><rect x="18" y="14" width="7" height="7" fill="none" stroke="#111" stroke-width="1.5"/><path d="M11 16 H13 M21 17 H22" stroke="#111" stroke-width="1" fill="none"/></svg>
<div class="a" style="left:527px;top:654px;width:69px;height:36px;background:#fbfbfc;border:1px solid #cfcfd3;border-radius:3px;"></div>
<svg class="a" style="left:527px;top:654px;" width="69" height="36" viewBox="0 0 69 36"><path d="M3 4 H66" stroke="#111" stroke-width="1.8" fill="none"/><circle cx="10" cy="10" r="2.5" fill="none" stroke="#111" stroke-width="1.3"/><rect x="9" y="18" width="14" height="15" fill="none" stroke="#111" stroke-width="1.3"/><path d="M12 22 H20" stroke="#111" stroke-width="1" fill="none"/><text x="11" y="30" font-size="6.5" fill="#7a1f2a" font-weight="bold" font-family="Liberation Serif">Σm</text><path d="M10 13 V16 M17 16 L20 14" stroke="#111" stroke-width="1" fill="none"/><circle cx="31" cy="10" r="2.5" fill="none" stroke="#111" stroke-width="1.3"/><rect x="30" y="18" width="14" height="15" fill="none" stroke="#111" stroke-width="1.3"/><path d="M33 22 H41" stroke="#111" stroke-width="1" fill="none"/><text x="32" y="30" font-size="6.5" fill="#7a1f2a" font-weight="bold" font-family="Liberation Serif">Σm</text><path d="M31 13 V16 M38 16 L41 14" stroke="#111" stroke-width="1" fill="none"/><circle cx="51" cy="10" r="2.5" fill="none" stroke="#111" stroke-width="1.3"/><rect x="50" y="18" width="14" height="15" fill="none" stroke="#111" stroke-width="1.3"/><path d="M53 22 H61" stroke="#111" stroke-width="1" fill="none"/><text x="52" y="30" font-size="6.5" fill="#7a1f2a" font-weight="bold" font-family="Liberation Serif">Σm</text><path d="M51 13 V16 M58 16 L61 14" stroke="#111" stroke-width="1" fill="none"/></svg>
<div class="a" style="left:605px;top:186px;width:636px;height:578px;background:#f0eff3;border:1px solid #6a6a6e;"></div>
<div class="a" style="left:1245px;top:186px;width:1px;height:578px;background:#fafafa;"></div>
<svg class="a" style="left:1248px;top:191px;" width="9" height="6" viewBox="0 0 9 6"><path d="M0 6 L4.5 0 L9 6 Z" fill="#8a8a8c"/></svg>
<svg class="a" style="left:1248px;top:754px;" width="9" height="6" viewBox="0 0 9 6"><path d="M0 0 L4.5 6 L9 0 Z" fill="#8a8a8c"/></svg>
<svg class="a" style="left:608px;top:772px;" width="6" height="9" viewBox="0 0 6 9"><path d="M6 0 L0 4.5 L6 9 Z" fill="#9a9a9c"/></svg>
<svg class="a" style="left:1230px;top:772px;" width="6" height="9" viewBox="0 0 6 9"><path d="M0 0 L6 4.5 L0 9 Z" fill="#9a9a9c"/></svg>
<div class="a" style="left:608px;top:482px;width:33px;height:34px;background:#cbcacd;border:1px solid #bdbcc0;border-radius:3px;"></div>
<div class="a" style="left:644px;top:482px;width:33px;height:34px;background:#cbcacd;border:1px solid #bdbcc0;border-radius:3px;"></div>
<div class="a" style="left:680px;top:482px;width:33px;height:34px;background:#cbcacd;border:1px solid #bdbcc0;border-radius:3px;"></div>
<div class="a" style="left:716px;top:482px;width:33px;height:34px;background:#cbcacd;border:1px solid #bdbcc0;border-radius:3px;"></div>
<div class="a" style="left:752px;top:482px;width:33px;height:34px;background:#cbcacd;border:1px solid #bdbcc0;border-radius:3px;"></div>
<div class="a" style="left:788px;top:482px;width:33px;height:34px;background:#cbcacd;border:1px solid #bdbcc0;border-radius:3px;"></div>
<div class="a" style="left:824px;top:482px;width:33px;height:34px;background:#cbcacd;border:1px solid #bdbcc0;border-radius:3px;"></div>
<div class="a" style="left:860px;top:482px;width:33px;height:34px;background:#cbcacd;border:1px solid #bdbcc0;border-radius:3px;"></div>
<div class="a" style="left:896px;top:482px;width:33px;height:34px;background:#ffffff;border:1px solid #cfcfd3;border-radius:3px;"></div>
<div class="a" style="left:932px;top:482px;width:33px;height:34px;background:#cbcacd;border:1px solid #bdbcc0;border-radius:3px;"></div>
<div class="a" style="left:968px;top:482px;width:33px;height:34px;background:#cbcacd;border:1px solid #bdbcc0;border-radius:3px;"></div>
<div class="a" style="left:1004px;top:482px;width:33px;height:34px;background:#cbcacd;border:1px solid #bdbcc0;border-radius:3px;"></div>
<div class="a" style="left:1040px;top:482px;width:33px;height:34px;background:#cbcacd;border:1px solid #bdbcc0;border-radius:3px;"></div>
<div class="a" style="left:1076px;top:482px;width:33px;height:34px;background:#cbcacd;border:1px solid #bdbcc0;border-radius:3px;"></div>
<div class="a" style="left:1112px;top:482px;width:33px;height:34px;background:#cbcacd;border:1px solid #bdbcc0;border-radius:3px;"></div>
<div class="a" style="left:1148px;top:482px;width:33px;height:34px;background:#cbcacd;border:1px solid #bdbcc0;border-radius:3px;"></div>
<div class="a" style="left:1184px;top:482px;width:33px;height:34px;background:#cbcacd;border:1px solid #bdbcc0;border-radius:3px;"></div>
<div class="t" style="left:909.4px;top:494.2px;font-size:11px;color:#111;">1</div>
<div class="a" style="left:608px;top:553px;width:33px;height:34px;background:#fbfbfc;border:1px solid #c4c4c8;border-radius:3px;"></div>
<div class="a" style="left:644px;top:553px;width:33px;height:34px;background:#fbfbfc;border:1px solid #c4c4c8;border-radius:3px;"></div>
<div class="a" style="left:680px;top:553px;width:33px;height:34px;background:#fbfbfc;border:1px solid #c4c4c8;border-radius:3px;"></div>
<div class="a" style="left:716px;top:553px;width:33px;height:34px;background:#fbfbfc;border:1px solid #c4c4c8;border-radius:3px;"></div>
<div class="a" style="left:752px;top:553px;width:33px;height:34px;background:#fbfbfc;border:1px solid #c4c4c8;border-radius:3px;"></div>
<div class="a" style="left:788px;top:553px;width:33px;height:34px;background:#fbfbfc;border:1px solid #c4c4c8;border-radius:3px;"></div>
<div class="a" style="left:824px;top:553px;width:33px;height:34px;background:#fbfbfc;border:1px solid #c4c4c8;border-radius:3px;"></div>
<div class="a" style="left:860px;top:553px;width:33px;height:34px;background:#fbfbfc;border:1px solid #c4c4c8;border-radius:3px;"></div>
<div class="a" style="left:896px;top:553px;width:33px;height:34px;background:#fbfbfc;border:1px solid #c4c4c8;border-radius:3px;"></div>
<div class="a" style="left:932px;top:553px;width:33px;height:34px;background:#fbfbfc;border:1px solid #c4c4c8;border-radius:3px;"></div>
<div class="a" style="left:968px;top:553px;width:33px;height:34px;background:#fbfbfc;border:1px solid #c4c4c8;border-radius:3px;"></div>
<div class="a" style="left:1004px;top:553px;width:33px;height:34px;background:#fbfbfc;border:1px solid #c4c4c8;border-radius:3px;"></div>
<div class="a" style="left:1040px;top:553px;width:33px;height:34px;background:#fbfbfc;border:1px solid #c4c4c8;border-radius:3px;"></div>
<div class="a" style="left:1076px;top:553px;width:33px;height:34px;background:#fbfbfc;border:1px solid #c4c4c8;border-radius:3px;"></div>
<div class="a" style="left:1112px;top:553px;width:33px;height:34px;background:#fbfbfc;border:1px solid #c4c4c8;border-radius:3px;"></div>
<div class="a" style="left:1148px;top:553px;width:33px;height:34px;background:#fbfbfc;border:1px solid #c4c4c8;border-radius:3px;"></div>
<div class="a" style="left:1184px;top:553px;width:33px;height:34px;background:#fbfbfc;border:1px solid #c4c4c8;border-radius:3px;"></div>
<div class="a" style="left:608px;top:623px;width:33px;height:34px;background:#fbfbfc;border:1px solid #c4c4c8;border-radius:3px;"></div>
<div class="a" style="left:644px;top:623px;width:33px;height:34px;background:#fbfbfc;border:1px solid #c4c4c8;border-radius:3px;"></div>
<div class="a" style="left:680px;top:623px;width:33px;height:34px;background:#fbfbfc;border:1px solid #c4c4c8;border-radius:3px;"></div>
<div class="a" style="left:716px;top:623px;width:33px;height:34px;background:#fbfbfc;border:1px solid #c4c4c8;border-radius:3px;"></div>
<div class="a" style="left:752px;top:623px;width:33px;height:34px;background:#fbfbfc;border:1px solid #c4c4c8;border-radius:3px;"></div>
<div class="a" style="left:788px;top:623px;width:33px;height:34px;background:#fbfbfc;border:1px solid #c4c4c8;border-radius:3px;"></div>
<div class="a" style="left:824px;top:623px;width:33px;height:34px;background:#fbfbfc;border:1px solid #c4c4c8;border-radius:3px;"></div>
<div class="a" style="left:860px;top:623px;width:33px;height:34px;background:#fbfbfc;border:1px solid #c4c4c8;border-radius:3px;"></div>
<div class="a" style="left:896px;top:623px;width:33px;height:34px;background:#fbfbfc;border:1px solid #c4c4c8;border-radius:3px;"></div>
<div class="a" style="left:932px;top:623px;width:33px;height:34px;background:#fbfbfc;border:1px solid #c4c4c8;border-radius:3px;"></div>
<div class="a" style="left:968px;top:623px;width:33px;height:34px;background:#fbfbfc;border:1px solid #c4c4c8;border-radius:3px;"></div>
<div class="a" style="left:1004px;top:623px;width:33px;height:34px;background:#fbfbfc;border:1px solid #c4c4c8;border-radius:3px;"></div>
<div class="a" style="left:1040px;top:623px;width:33px;height:34px;background:#fbfbfc;border:1px solid #c4c4c8;border-radius:3px;"></div>
<div class="a" style="left:1076px;top:623px;width:33px;height:34px;background:#fbfbfc;border:1px solid #c4c4c8;border-radius:3px;"></div>
<div class="a" style="left:1112px;top:623px;width:33px;height:34px;background:#fbfbfc;border:1px solid #c4c4c8;border-radius:3px;"></div>
<div class="a" style="left:1148px;top:623px;width:33px;height:34px;background:#fbfbfc;border:1px solid #c4c4c8;border-radius:3px;"></div>
<div class="a" style="left:1184px;top:623px;width:33px;height:34px;background:#fbfbfc;border:1px solid #c4c4c8;border-radius:3px;"></div>
<div class="a" style="left:608px;top:694px;width:33px;height:34px;background:#fbfbfc;border:1px solid #c4c4c8;border-radius:3px;"></div>
<div class="a" style="left:644px;top:694px;width:33px;height:34px;background:#fbfbfc;border:1px solid #c4c4c8;border-radius:3px;"></div>
<div class="a" style="left:680px;top:694px;width:33px;height:34px;background:#fbfbfc;border:1px solid #c4c4c8;border-radius:3px;"></div>
<div class="a" style="left:716px;top:694px;width:33px;height:34px;background:#fbfbfc;border:1px solid #c4c4c8;border-radius:3px;"></div>
<div class="a" style="left:752px;top:694px;width:33px;height:34px;background:#fbfbfc;border:1px solid #c4c4c8;border-radius:3px;"></div>
<div class="a" style="left:788px;top:694px;width:33px;height:34px;background:#fbfbfc;border:1px solid #c4c4c8;border-radius:3px;"></div>
<div class="a" style="left:824px;top:694px;width:33px;height:34px;background:#fbfbfc;border:1px solid #c4c4c8;border-radius:3px;"></div>
<div class="a" style="left:860px;top:694px;width:33px;height:34px;background:#fbfbfc;border:1px solid #c4c4c8;border-radius:3px;"></div>
<div class="a" style="left:896px;top:694px;width:33px;height:34px;background:#fbfbfc;border:1px solid #c4c4c8;border-radius:3px;"></div>
<div class="a" style="left:932px;top:694px;width:33px;height:34px;background:#fbfbfc;border:1px solid #c4c4c8;border-radius:3px;"></div>
<div class="a" style="left:968px;top:694px;width:33px;height:34px;background:#fbfbfc;border:1px solid #c4c4c8;border-radius:3px;"></div>
<div class="a" style="left:1004px;top:694px;width:33px;height:34px;background:#fbfbfc;border:1px solid #c4c4c8;border-radius:3px;"></div>
<div class="a" style="left:1040px;top:694px;width:33px;height:34px;background:#fbfbfc;border:1px solid #c4c4c8;border-radius:3px;"></div>
<div class="a" style="left:1076px;top:694px;width:33px;height:34px;background:#fbfbfc;border:1px solid #c4c4c8;border-radius:3px;"></div>
<div class="a" style="left:1112px;top:694px;width:33px;height:34px;background:#fbfbfc;border:1px solid #c4c4c8;border-radius:3px;"></div>
<div class="a" style="left:1148px;top:694px;width:33px;height:34px;background:#fbfbfc;border:1px solid #c4c4c8;border-radius:3px;"></div>
<div class="a" style="left:1184px;top:694px;width:33px;height:34px;background:#fbfbfc;border:1px solid #c4c4c8;border-radius:3px;"></div>
<div class="t" style="left:1222.0px;top:564.9px;font-size:9px;color:#222;transform:scaleX(1.047);transform-origin:0 0;">1F</div>
<div class="t" style="left:1222.0px;top:635.4px;font-size:9px;color:#222;transform:scaleX(0.960);transform-origin:0 0;">GF</div>
<div class="t" style="left:1222.0px;top:705.9px;font-size:9px;color:#222;transform:scaleX(0.999);transform-origin:0 0;">BS</div>
<div class="a" style="left:910px;top:553px;width:1px;height:86px;background:#7a2424;"></div>
<div class="a" style="left:913px;top:553px;width:1px;height:86px;background:#1a1a1a;"></div>
<div class="a" style="left:916px;top:553px;width:2px;height:86px;background:#4cb050;"></div>
<svg class="a" style="left:752px;top:623px;" width="33" height="34" viewBox="0 0 33 34"><rect x="11" y="4" width="11" height="7" fill="none" stroke="#111" stroke-width="1.3"/><path d="M10.5 15 H22.5 C20.5 19.2 18.5 21 16.5 21 C14.5 21 12.5 19.2 10.5 15 Z" fill="none" stroke="#111" stroke-width="1.6"/><path d="M16.5 21 V23.5" stroke="#111" stroke-width="1.6"/><path d="M2 28 H31" stroke="#5a1a22" stroke-width="1.3"/></svg>
<svg class="a" style="left:788px;top:623px;" width="33" height="34" viewBox="0 0 33 34"><path d="M10.5 15 H22.5 C20.5 18.5 18.5 20 16.5 20 C14.5 20 12.5 18.5 10.5 15 Z" fill="none" stroke="#111" stroke-width="1.6"/><path d="M16.5 20 V22.5" stroke="#111" stroke-width="1.6"/><path d="M2 28 H31" stroke="#5a1a22" stroke-width="1.3"/></svg>
<svg class="a" style="left:824px;top:623px;" width="33" height="34" viewBox="0 0 33 34"><path d="M4 17 H27 V23 H19 L17 25 H9 Z" fill="none" stroke="#111" stroke-width="1.3"/><path d="M2 28 H31" stroke="#5a1a22" stroke-width="1.3"/></svg>
<svg class="a" style="left:860px;top:623px;" width="33" height="34" viewBox="0 0 33 34"><rect x="8" y="19" width="17" height="5" fill="none" stroke="#111" stroke-width="1.3"/><path d="M2 28 H31" stroke="#5a1a22" stroke-width="1.3"/></svg>
<svg class="a" style="left:760px;top:656px;" width="150" height="20" viewBox="0 0 150 20"><path d="M9 0 V18 M45 0 V18 M81 0 V18 M117 0 V18 M9 18 H150" stroke="#58b858" stroke-width="1.2" fill="none"/></svg>
<svg class="a" style="left:788px;top:694px;" width="33" height="34" viewBox="0 0 33 34"><path d="M4 17 H9" stroke="#111" stroke-width="1" fill="none"/><path d="M5 15 L6 19 M7 15 L8 19" stroke="#111" stroke-width="0.8" fill="none"/><rect x="9" y="12" width="6" height="9" fill="none" stroke="#111" stroke-width="1.5"/><rect x="18" y="13" width="8" height="7" fill="none" stroke="#111" stroke-width="1.5"/><path d="M10 17 H15 M26 17 H30" stroke="#111" stroke-width="1" fill="none"/><path d="M12 14 V16 M21 15 V18" stroke="#111" stroke-width="1" fill="none"/></svg>
<svg class="a" style="left:860px;top:694px;" width="33" height="34" viewBox="0 0 33 34"><path d="M11 6 C11 3 14 2 16.5 2 C19 2 22 3 22 6 V26 C22 29 19 30 16.5 30 C14 30 11 29 11 26 Z" fill="none" stroke="#111" stroke-width="1.3"/><path d="M22 7 H26 M22 14 H26 M7 26 H11 M14 34 L16.5 30 L19 34 M22 28 H24" stroke="#111" stroke-width="1.2" fill="none"/></svg>
<svg class="a" style="left:796px;top:727px;" width="115" height="20" viewBox="0 0 115 20"><path d="M9 0 V18 M81 0 V18 M9 18 H115" stroke="#58b858" stroke-width="1.2" fill="none"/></svg>
<div class="a" style="left:792px;top:789px;width:115px;height:18px;background:#ffffff;border-bottom:2px solid #8a8a8c"></div>
<div class="t" style="left:889.8px;top:791.2px;font-size:11px;color:#111;transform:scaleX(0.883);transform-origin:0 0;">1. p</div>
<div class="a" style="left:865px;top:810px;width:17px;height:17px;background:#fbfbfc;border:1px solid #c4c4c8;border-radius:3px;"></div>
<svg class="a" style="left:868px;top:813px;" width="11" height="11" viewBox="0 0 11 11"><path d="M5.5 1 V10 M1 5.5 H10" stroke="#111" stroke-width="1.5"/></svg>
<div class="a" style="left:885px;top:810px;width:30px;height:17px;background:#dce8f6;border:1px solid #90b0d4;border-radius:3px;"></div>
<div class="a" style="left:1284px;top:537px;width:27px;height:22px;background:#ffffff;border:1px solid #b8b8bc;border-radius:3px;"></div>
<div class="a" style="left:1315px;top:537px;width:27px;height:22px;background:#cdcbd0;border:1px solid #b8b8bc;border-radius:3px;"></div>
<svg class="a" style="left:1291px;top:542px;" width="14" height="12" viewBox="0 0 14 12"><path d="M3 9 C2 3 10 1 12 6" stroke="#111" stroke-width="1.8" fill="none"/><path d="M0 6 L3.5 11 L6.5 6 Z" fill="#111"/></svg>
<svg class="a" style="left:1322px;top:542px;" width="14" height="12" viewBox="0 0 14 12"><path d="M11 9 C12 3 4 1 2 6" stroke="#111" stroke-width="1.8" fill="none"/><path d="M14 6 L10.5 11 L7.5 6 Z" fill="#111"/></svg>
<div class="a" style="left:1269px;top:603px;width:92px;height:19px;border:1px solid #bdbdc2;border-radius:3px;background:linear-gradient(#ffffff,#f4f4f6)"></div>
<div class="t" style="left:1304.5px;top:607.5px;font-size:10.5px;color:#111;transform:scaleX(0.905);transform-origin:0 0;">New</div>
<div class="a" style="left:1269px;top:626px;width:92px;height:18px;border:1px solid #bdbdc2;border-radius:3px;background:linear-gradient(#ffffff,#f4f4f6)"></div>
<div class="t" style="left:1297.0px;top:630.1px;font-size:10.5px;color:#111;transform:scaleX(1.059);transform-origin:0 0;">Load...</div>
<div class="a" style="left:1269px;top:648px;width:92px;height:18px;border:1px solid #bdbdc2;border-radius:3px;background:linear-gradient(#ffffff,#f4f4f6)"></div>
<div class="t" style="left:1297.0px;top:652.1px;font-size:10.5px;color:#111;transform:scaleX(1.040);transform-origin:0 0;">Save...</div>
<div class="a" style="left:1269px;top:671px;width:92px;height:18px;border:1px solid #bdbdc2;border-radius:3px;background:linear-gradient(#ffffff,#f4f4f6)"></div>
<div class="t" style="left:1289.0px;top:675.1px;font-size:10.5px;color:#111;transform:scaleX(1.135);transform-origin:0 0;">Options...</div>
<div class="a" style="left:1269px;top:693px;width:92px;height:18px;border:1px solid #bdbdc2;border-radius:3px;background:linear-gradient(#ffffff,#f4f4f6)"></div>
<div class="t" style="left:1275.0px;top:697.1px;font-size:10.5px;color:#111;transform:scaleX(0.998);transform-origin:0 0;">Import from W.w.</div>
<div class="a" style="left:1269px;top:716px;width:92px;height:19px;border:1px solid #bdbdc2;border-radius:3px;background:linear-gradient(#ffffff,#f4f4f6)"></div>
<div class="t" style="left:1291.5px;top:720.1px;font-size:10.5px;color:#111;transform:scaleX(1.015);transform-origin:0 0;">Storeys...</div>
<div class="a" style="left:1269px;top:745px;width:92px;height:20px;border:1px solid #bdbdc2;border-radius:3px;background:linear-gradient(#ffffff,#f4f4f6)"></div>
<div class="t" style="left:1297.5px;top:750.1px;font-size:10.5px;color:#111;transform:scaleX(0.998);transform-origin:0 0;">Draw &lt;</div>
<div class="a" style="left:1268px;top:783px;width:12px;height:12px;background:#fbfbfc;border:1px solid #555;border-radius:2px;"></div>
<div class="t" style="left:1282.0px;top:777.1px;font-size:10.5px;color:#111;transform:scaleX(0.944);transform-origin:0 0;">Show insertion</div>
<div class="t" style="left:1282.0px;top:788.6px;font-size:10.5px;color:#111;transform:scaleX(1.010);transform-origin:0 0;">point</div>
<div class="a" style="left:1269px;top:815px;width:92px;height:19px;border:1px solid #2f4a55;border-radius:3px;background:linear-gradient(#ffffff,#f4f4f6)"></div>
<div class="t" style="left:1306.0px;top:820.1px;font-size:10.5px;color:#111;transform:scaleX(0.971);transform-origin:0 0;">Exit</div>
<svg class="a" style="left:1361px;top:834px;" width="9" height="9" viewBox="0 0 9 9"><path d="M8.5 1 L1 8.5 M8.5 4.5 L4.5 8.5" stroke="#888" stroke-width="1"/></svg>
<div class="a" style="left:909px;top:641px;width:154px;height:253px;background:rgba(0,0,0,0.18);filter:blur(1.5px)"></div>
<div class="a" style="left:907px;top:638px;width:154px;height:254px;background:#f2f2f6;border:1px solid #8a8c92;background:linear-gradient(90deg,#eef2fa 0px,#e6eaf4 22px,#f4f4f8 24px,#f4f4f8 100%)"></div>
<div class="a" style="left:909px;top:641px;width:20px;height:18px;background:#f5b464;border:1px solid #3d5a6c;border-radius:1px;"></div>
<svg class="a" style="left:913px;top:645px;" width="12" height="10" viewBox="0 0 12 10"><path d="M1 5 L4.5 8.5 L11 1.5" stroke="#111" stroke-width="1.8" fill="none"/></svg>
<div class="a" style="left:909px;top:661px;width:20px;height:18px;background:#f5b464;border:1px solid #3d5a6c;border-radius:1px;"></div>
<svg class="a" style="left:913px;top:665px;" width="12" height="10" viewBox="0 0 12 10"><path d="M1 5 L4.5 8.5 L11 1.5" stroke="#111" stroke-width="1.8" fill="none"/></svg>
<div class="a" style="left:909px;top:682px;width:20px;height:18px;background:#f5b464;border:1px solid #3d5a6c;border-radius:1px;"></div>
<svg class="a" style="left:913px;top:686px;" width="12" height="10" viewBox="0 0 12 10"><path d="M1 5 L4.5 8.5 L11 1.5" stroke="#111" stroke-width="1.8" fill="none"/></svg>
<div class="a" style="left:934px;top:702px;width:124px;height:1px;background:#555a62;"></div>
<div class="a" style="left:934px;top:827px;width:124px;height:1px;background:#555a62;"></div>
<div class="a" style="left:909px;top:745px;width:149px;height:20px;background:#fae6b4;border:1px solid #5a7a92;border-radius:1px;"></div>
<div class="t" style="left:934.7px;top:644.5px;font-size:11.5px;color:#111;transform:scaleX(0.955);transform-origin:0 0;">Cold water</div>
<div class="t" style="left:934.7px;top:664.8px;font-size:11.5px;color:#111;transform:scaleX(0.971);transform-origin:0 0;">Hot water</div>
<div class="t" style="left:934.7px;top:685.3px;font-size:11.5px;color:#111;transform:scaleX(0.981);transform-origin:0 0;">Circulation</div>
<div class="t" style="left:934.7px;top:708.3px;font-size:11.5px;color:#111;transform:scaleX(0.929);transform-origin:0 0;">Insert storey</div>
<div class="t" style="left:934.7px;top:728.8px;font-size:11.5px;color:#111;transform:scaleX(0.932);transform-origin:0 0;">Remove storey</div>
<div class="t" style="left:934.7px;top:749.3px;font-size:11.5px;color:#111;transform:scaleX(0.950);transform-origin:0 0;">Copy storey content...</div>
<div class="t" style="left:934.7px;top:769.3px;font-size:11.5px;color:#111;transform:scaleX(0.946);transform-origin:0 0;">Delete storey content</div>
<div class="t" style="left:934.7px;top:789.8px;font-size:11.5px;color:#111;transform:scaleX(0.958);transform-origin:0 0;">Mirror left storey side</div>
<div class="t" style="left:934.7px;top:810.3px;font-size:11.5px;color:#111;transform:scaleX(0.936);transform-origin:0 0;">Storey options...</div>
<div class="t" style="left:934.7px;top:833.3px;font-size:11.5px;color:#111;transform:scaleX(0.947);transform-origin:0 0;">Pipe run options...</div>
<div class="t" style="left:934.7px;top:853.8px;font-size:11.5px;color:#111;transform:scaleX(0.946);transform-origin:0 0;">Copy pipe run...</div>
<div class="t" style="left:934.7px;top:874.3px;font-size:11.5px;color:#111;transform:scaleX(0.946);transform-origin:0 0;">Remove pipe run</div>
<svg class="a" style="left:914px;top:729px;" width="10" height="10" viewBox="0 0 10 10"><path d="M1 1 L9 9 M9 1 L1 9" stroke="#c03030" stroke-width="1.8"/></svg>
<svg class="a" style="left:910px;top:747px;" width="18" height="16" viewBox="0 0 18 16"><rect x="1" y="2" width="9" height="10" fill="#c8d8ec" stroke="#6a8ab0"/><rect x="7" y="5" width="9" height="10" fill="#e0ecf8" stroke="#6a8ab0"/><path d="M9 8 H14 M9 11 H14" stroke="#6a8ab0"/></svg>
<svg class="a" style="left:913px;top:789px;" width="8" height="12" viewBox="0 0 8 12"><path d="M0.5 0.5 L7.5 6 L0.5 11.5 Z" fill="#2a6a2a" stroke="#1a3a1a" stroke-width="0.8"/></svg>
<svg class="a" style="left:946px;top:756px;" width="16" height="22" viewBox="0 0 16 22"><path d="M1 1 V17 L5 13 L8 20 L10.5 19 L7.5 12 H13 Z" fill="#fff" stroke="#111" stroke-width="1.2"/></svg>
</body></html>
